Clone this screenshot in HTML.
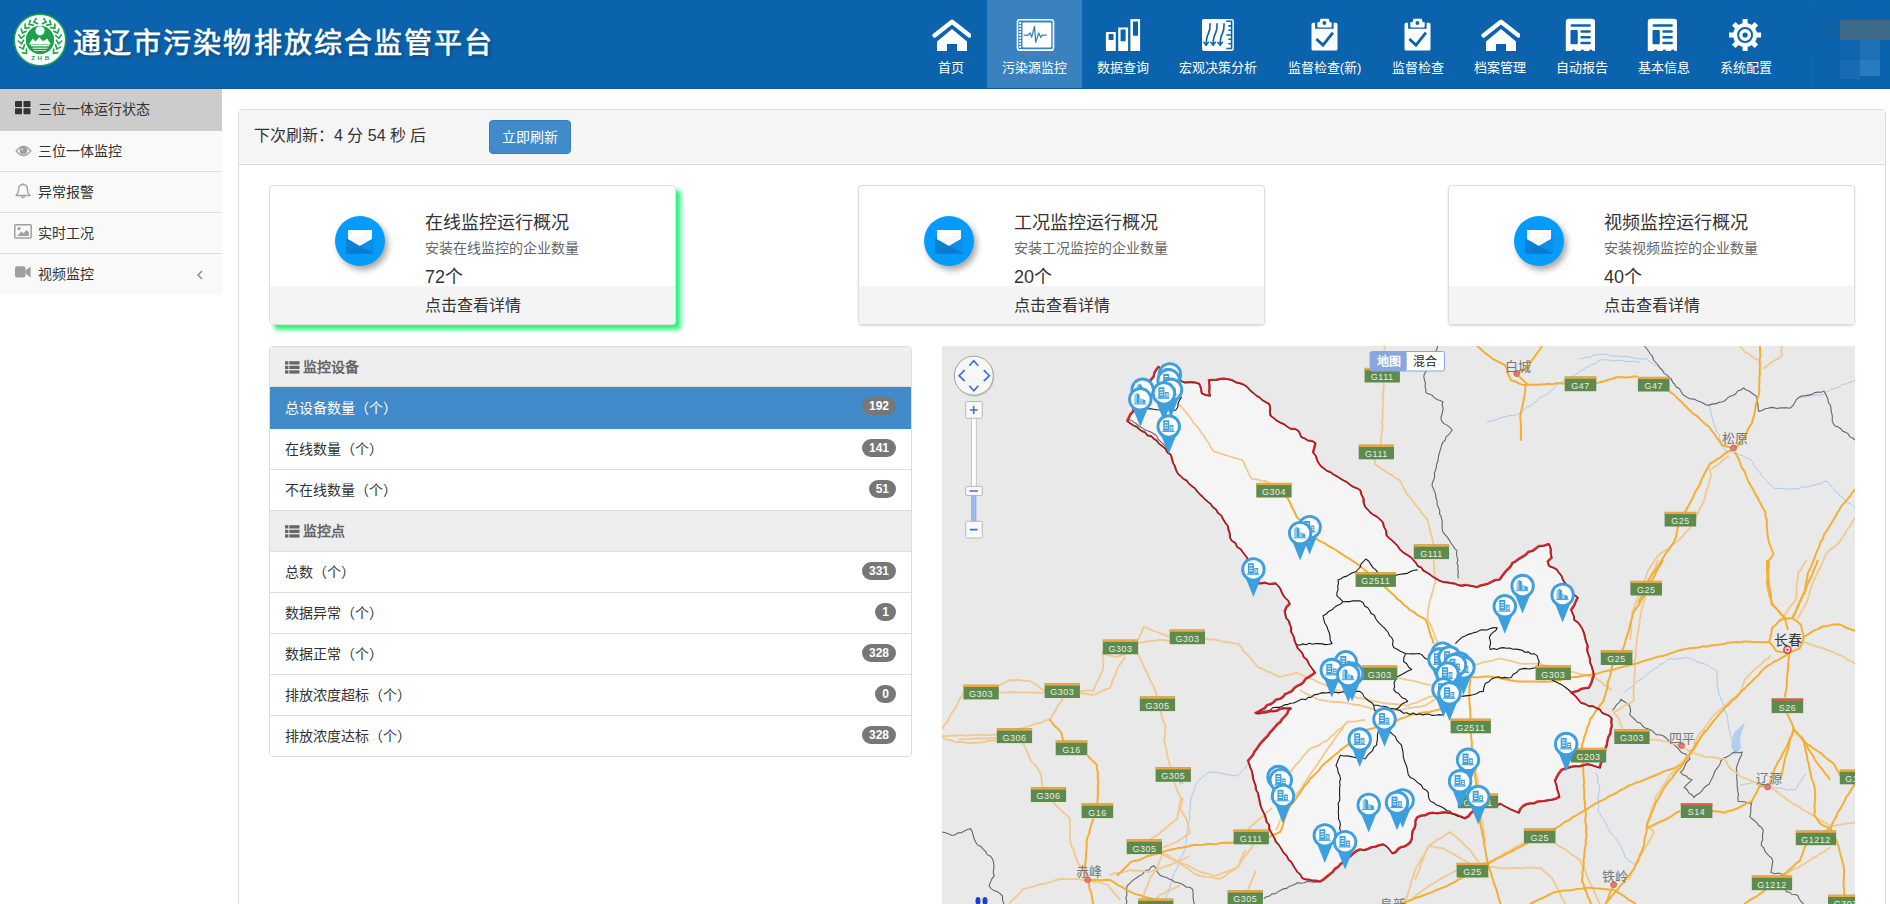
<!DOCTYPE html>
<html lang="zh-CN"><head><meta charset="utf-8">
<style>
*{margin:0;padding:0;box-sizing:border-box}
html,body{width:1890px;height:904px;overflow:hidden;background:#fff;font-family:"Liberation Sans",sans-serif;color:#333}
.abs{position:absolute}
#hdr{position:absolute;left:0;top:0;width:1890px;height:89px;background:#0b63ae;border-bottom:1px solid #0a5aa0}
#title{position:absolute;left:73px;top:21px;font-size:28px;letter-spacing:2.1px;color:#fff;font-weight:normal;-webkit-text-stroke:0.7px #fff;white-space:nowrap;text-shadow:2px 2px 4px rgba(0,0,0,.35)}
.nav{position:absolute;top:0;height:88px;text-align:center;color:#fff;font-size:13px}
.nav.act{background:#3a82bf}
.nav svg{position:absolute;top:18px;left:50%;margin-left:-20px;width:40px;height:34px}
.nav span{position:absolute;left:0;right:0;top:57px;white-space:nowrap}
#side{position:absolute;left:0;top:89px;width:222px}
.si{height:41px;background:#f9f9f9;border-bottom:1px solid #ddd;font-size:14px;color:#333;position:relative}
.si.act{background:#ccc;border-bottom:none;height:42px}
.si:last-child{border-bottom:none}
.si span{position:absolute;left:38px;top:8.5px}
.si svg{position:absolute;left:15px;top:13px}
#panel{position:absolute;left:238px;top:109px;width:1648px;height:820px;border:1px solid #ddd;border-radius:4px}
#ph{position:absolute;left:0;top:0;right:0;height:55px;background:#f5f5f5;border-bottom:1px solid #ddd}
#btn{position:absolute;left:250px;top:10px;width:82px;height:34px;background:#428bca;border:1px solid #357ebd;border-radius:4px;color:#fff;font-size:14px;text-align:center;line-height:32px}
.card{position:absolute;top:185px;width:407px;height:140px;border:1px solid #ddd;border-radius:4px;background:#fff;box-shadow:0 1px 2px rgba(0,0,0,.15)}
.card.g{box-shadow:5px 5px 4px #33f283}
.card .ic{position:absolute;left:65px;top:30px;width:50px;height:50px;border-radius:50%;background:#059bfb;box-shadow:3px 4px 6px rgba(0,0,0,.35)}
.card .t1{position:absolute;left:155px;top:21.5px;font-size:18px;color:#333;white-space:nowrap}
.card .t2{position:absolute;left:155px;top:51px;font-size:14px;color:#666;white-space:nowrap}
.card .t3{position:absolute;left:155px;top:76px;font-size:18px;color:#333;white-space:nowrap}
.card .ft{position:absolute;left:0;right:0;top:100px;bottom:0;background:#f4f4f4}
.card .ft span{position:absolute;left:155px;top:6px;font-size:16px;color:#333}
#list{position:absolute;left:269px;top:346px;width:643px;height:411px;border:1px solid #ddd;border-radius:4px;overflow:hidden}
.lr{position:relative;height:41px;border-bottom:1px solid #ddd;font-size:14px;color:#333;background:#fff}
.lr:last-child{border-bottom:none}
.lr.h{background:#eee;color:#666;font-weight:bold}
.lr.sel{background:#428bca;color:#fff;border-bottom-color:#428bca;height:42px}
.lr.h1{height:40px}
.lr span.l{position:absolute;left:15px;top:9px;white-space:nowrap}
.lr.h span.l{top:9px}
.lr.sel span.l{top:10px}
.lr .b{position:absolute;right:15px;top:10px;height:18px;padding:0 7px;border-radius:10px;background:#777;color:#fff;font-size:12px;font-weight:bold;line-height:18px}
#map{position:absolute;left:942px;top:346px;width:913px;height:558px;background:#e8e8e8;overflow:hidden}
</style></head><body>
<svg width="0" height="0" style="position:absolute"><defs>
<symbol id="i-house" viewBox="0 0 40 34"><path d="M3.5 17.5 L21 3.8 L38.5 17.5" fill="none" stroke="#fff" stroke-width="4.3" stroke-linecap="round" stroke-linejoin="round"/><path d="M6 23.5 L21 11 L36 23.5 V33 H26 V26 H16 V33 H6 Z" fill="#fff"/></symbol>
<symbol id="i-clip" viewBox="0 0 40 34"><path fill="#fff" d="M8 4.7 h2.1 v6.1 h18.5 v-6.1 h2.4 a1.5 1.5 0 0 1 1.5 1.5 v24.8 a1.5 1.5 0 0 1 -1.5 1.5 h-23 a1.5 1.5 0 0 1 -1.5 -1.5 v-24.8 a1.5 1.5 0 0 1 1.5 -1.5 Z"/><path fill="#fff" d="M12.3 8.6 v-4.4 h2.2 l1 -3.4 h8.2 l1 3.4 h2 v4.4 a0.8 0.8 0 0 1 -0.8 0.8 h-12.8 a0.8 0.8 0 0 1 -0.8 -0.8 Z"/><circle cx="19.4" cy="5" r="1.9" fill="#0b63ae"/><path d="M11.3 21 L18 27.1 L27.9 14.7" fill="none" stroke="#0b63ae" stroke-width="2.8"/></symbol>
<symbol id="i-report" viewBox="0 0 40 34"><path fill="#fff" fill-rule="evenodd" d="M3.8 3.8 a3 3 0 0 1 3 -3 h23.2 a3 3 0 0 1 3 3 V32.9 h-2.3 a2 2 0 0 0 -3.8 0 h-4.7 a2 2 0 0 0 -3.8 0 h-4.7 a2 2 0 0 0 -3.8 0 H3.8 Z M9.8 6.2 h17.8 a1.3 1.3 0 0 1 0 2.6 h-17.8 a1.3 1.3 0 0 1 0 -2.6 Z M9.5 12 h5.3 a1 1 0 0 1 1 1 v12.3 a1 1 0 0 1 -1 1 h-5.3 a1 1 0 0 1 -1 -1 v-12.3 a1 1 0 0 1 1 -1 Z M19.6 12.2 h8 a1.25 1.25 0 0 1 0 2.5 h-8 a1.25 1.25 0 0 1 0 -2.5 Z M19.6 17.9 h8 a1.3 1.3 0 0 1 0 2.6 h-8 a1.3 1.3 0 0 1 0 -2.6 Z M19.6 23.7 h8 a1.3 1.3 0 0 1 0 2.6 h-8 a1.3 1.3 0 0 1 0 -2.6 Z"/></symbol>
</defs></svg>
<div id="hdr">

  <svg class="abs" style="left:13px;top:13px" width="54" height="54" viewBox="0 0 54 54">
    <circle cx="27" cy="27" r="25.8" fill="#fff" stroke="#1aa34a" stroke-width="1.6"/>
    <g fill="none" stroke="#1aa34a" stroke-width="1.6" stroke-linecap="round"><path transform="translate(12.95 39.65) rotate(-132.0)" d="M2.4 -2.7 L-0.8 0 L2.4 2.7"/><path transform="translate(9.94 35.14) rotate(-115.5)" d="M2.4 -2.7 L-0.8 0 L2.4 2.7"/><path transform="translate(8.33 29.96) rotate(-99.0)" d="M2.4 -2.7 L-0.8 0 L2.4 2.7"/><path transform="translate(8.26 24.53) rotate(-82.5)" d="M2.4 -2.7 L-0.8 0 L2.4 2.7"/><path transform="translate(9.73 19.31) rotate(-66.0)" d="M2.4 -2.7 L-0.8 0 L2.4 2.7"/><path transform="translate(12.63 14.73) rotate(-49.5)" d="M2.4 -2.7 L-0.8 0 L2.4 2.7"/><path transform="translate(16.71 11.15) rotate(-33.0)" d="M2.4 -2.7 L-0.8 0 L2.4 2.7"/><path transform="translate(21.63 8.88) rotate(-16.5)" d="M2.4 -2.7 L-0.8 0 L2.4 2.7"/><path transform="translate(41.05 39.65) rotate(-48.0)" d="M2.4 -2.7 L-0.8 0 L2.4 2.7"/><path transform="translate(44.06 35.14) rotate(-64.5)" d="M2.4 -2.7 L-0.8 0 L2.4 2.7"/><path transform="translate(45.67 29.96) rotate(-81.0)" d="M2.4 -2.7 L-0.8 0 L2.4 2.7"/><path transform="translate(45.74 24.53) rotate(-97.5)" d="M2.4 -2.7 L-0.8 0 L2.4 2.7"/><path transform="translate(44.27 19.31) rotate(-114.0)" d="M2.4 -2.7 L-0.8 0 L2.4 2.7"/><path transform="translate(41.37 14.73) rotate(-130.5)" d="M2.4 -2.7 L-0.8 0 L2.4 2.7"/><path transform="translate(37.29 11.15) rotate(-147.0)" d="M2.4 -2.7 L-0.8 0 L2.4 2.7"/><path transform="translate(32.37 8.88) rotate(-163.5)" d="M2.4 -2.7 L-0.8 0 L2.4 2.7"/></g>
    <circle cx="27" cy="27" r="14.2" fill="#1aa34a"/>
    <circle cx="27" cy="17.8" r="4.6" fill="#fff"/>
    <path d="M16 31.5 L19.6 25.5 L22.5 28.5 L26.2 24.3 L30 28.3 L34.2 25.5 L37.8 31.5 Z" fill="#fff"/>
    <rect x="18" y="32" width="18" height="1.3" fill="#fff"/>
    <rect x="19.5" y="34.6" width="15" height="1.2" fill="#fff" opacity=".8"/>
    <rect x="21" y="37" width="12" height="1" fill="#fff" opacity=".7"/>
    <text x="28.5" y="47.3" text-anchor="middle" font-size="6.2" fill="#1aa34a" font-family="Liberation Sans" font-weight="bold" letter-spacing="2.6">ZHB</text>
  </svg>
  <div class="nav" style="left:915px;width:72px"><svg viewBox="0 0 40 34"><use href="#i-house"/></svg><span>首页</span></div>
  <div class="nav act" style="left:987px;width:95px"><svg viewBox="0 0 40 34"><rect x="2.5" y="1.7" width="36" height="30.4" rx="2.2" fill="none" stroke="#fff" stroke-width="1.6"/><rect x="7.5" y="4.6" width="28.8" height="24.9" rx="1.2" fill="#fff"/><g fill="#fff"><rect x="4.2" y="4.1" width="1.9" height="1.9" rx=".4"/><rect x="4.2" y="7.1" width="1.9" height="1.9" rx=".4"/><rect x="4.2" y="10.1" width="1.9" height="1.9" rx=".4"/><rect x="4.2" y="13.1" width="1.9" height="1.9" rx=".4"/><rect x="4.2" y="16.1" width="1.9" height="1.9" rx=".4"/><rect x="4.2" y="19.1" width="1.9" height="1.9" rx=".4"/><rect x="4.2" y="22.1" width="1.9" height="1.9" rx=".4"/><rect x="4.2" y="25.1" width="1.9" height="1.9" rx=".4"/><rect x="4.2" y="28.1" width="1.9" height="1.9" rx=".4"/></g><path d="M9.1 17.1 L12.8 17.4 L15.1 15 L16.7 19.2 L19.5 8.3 L20.7 24.3 L23.7 15 L25.8 19.5 L27.2 17.1 L31.4 17.1" fill="none" stroke="#3a82bf" stroke-width="1.3" stroke-linejoin="round" stroke-linecap="round"/></svg><span>污染源监控</span></div>
  <div class="nav" style="left:1082px;width:82px"><svg viewBox="0 0 40 34"><path fill="#fff" fill-rule="evenodd" d="M2.9 14 h9.9 v19 h-9.9 Z M5.6 16 v6 h4.9 v-6 Z M15.2 9.4 h9.9 v23.6 h-9.9 Z M17.6 11.5 v11.8 h5 v-11.8 Z M27.4 1 h9.7 v32 h-9.7 Z M30 3.4 v14.4 h5 v-14.4 Z"/></svg><span>数据查询</span></div>
  <div class="nav" style="left:1164px;width:108px"><svg viewBox="0 0 40 34"><rect x="4" y="0.9" width="31.8" height="32" rx="1.8" fill="#fff"/><g fill="none" stroke="#0b63ae" stroke-width="1.6" stroke-linecap="round"><path d="M12.1 5.8 C12.2 10 11.8 13 10.2 16 C8.6 19 8.2 22 8.2 27"/><path d="M5.9 24.3 L8.1 27 L10.5 24.3"/><path d="M19.1 5.8 C19.2 10 18.8 13 17.2 16 C15.6 19 15.2 22 15.2 27"/><path d="M12.9 24.3 L15.1 27 L17.5 24.3"/><path d="M26.1 5.8 C26.2 10 25.8 13 24.2 16 C22.6 19 22.2 22 22.2 27"/><path d="M19.9 24.3 L22.1 27 L24.5 24.3"/><path d="M28.3 3.3 H33.6 V30.5 H28.3 M28.3 17 H33.6 M30.3 7.9 H33.6 M30.3 12.3 H33.6 M30.3 21.3 H33.6 M30.3 25.8 H33.6" stroke-linecap="butt"/></g></svg><span>宏观决策分析</span></div>
  <div class="nav" style="left:1272px;width:105px"><svg viewBox="0 0 40 34"><use href="#i-clip"/></svg><span>监督检查(新)</span></div>
  <div class="nav" style="left:1377px;width:82px"><svg viewBox="0 0 40 34"><use href="#i-clip"/></svg><span>监督检查</span></div>
  <div class="nav" style="left:1459px;width:82px"><svg viewBox="0 0 40 34"><use href="#i-house"/></svg><span>档案管理</span></div>
  <div class="nav" style="left:1541px;width:82px"><svg viewBox="0 0 40 34"><use href="#i-report"/></svg><span>自动报告</span></div>
  <div class="nav" style="left:1623px;width:82px"><svg viewBox="0 0 40 34"><use href="#i-report"/></svg><span>基本信息</span></div>
  <div class="nav" style="left:1705px;width:82px"><svg viewBox="0 0 40 34"><g transform="translate(19.1 17)"><g fill="#fff"><circle r="12"/><rect x="-2.5" y="-16" width="5" height="32"/><rect x="-2.5" y="-16" width="5" height="32" transform="rotate(45)"/><rect x="-2.5" y="-16" width="5" height="32" transform="rotate(90)"/><rect x="-2.5" y="-16" width="5" height="32" transform="rotate(135)"/></g><circle r="7" fill="none" stroke="#0b63ae" stroke-width="2"/><circle r="2.6" fill="#0b63ae"/></g></svg><span>系统配置</span></div>
  <div class="abs" style="left:1811px;top:0;width:1px;height:3px;background:#1a6a9a"></div><div class="abs" style="left:1811px;top:58px;width:1px;height:30px;background:#1a6a9a"></div>
  <div class="abs" style="left:1820px;top:20px;width:20px;height:20px;background:#0f61a8"></div>
  <div class="abs" style="left:1840px;top:20px;width:50px;height:20px;background:#3d6a88"></div>
  <div class="abs" style="left:1840px;top:40px;width:20px;height:20px;background:#1165b0"></div>
  <div class="abs" style="left:1860px;top:40px;width:20px;height:20px;background:#1f70b6"></div>
  <div class="abs" style="left:1840px;top:60px;width:20px;height:19px;background:#186bb3"></div>
  <div class="abs" style="left:1860px;top:60px;width:20px;height:16px;background:#2a7abe"></div>
  <div id="title">通辽市污染物排放综合监管平台</div>
</div>
<div id="side">
  <div class="si act"><span>三位一体运行状态</span><svg width="16" height="14" viewBox="0 0 16 14" style="left:15px;top:12px"><g fill="#333"><rect x="0" y="0" width="7" height="6" rx=".8"/><rect x="8.5" y="0" width="7" height="6" rx=".8"/><rect x="0" y="7.3" width="7" height="6" rx=".8"/><rect x="8.5" y="7.3" width="7" height="6" rx=".8"/></g></svg></div>
  <div class="si"><span>三位一体监控</span><svg width="17" height="12" viewBox="0 0 17 12" style="left:14.5px;top:13.5px"><path d="M0.3 6 Q8.5 -4.5 16.7 6 Q8.5 16.5 0.3 6 Z" fill="#a0a0a0"/><path d="M2.2 6 Q8.5 -2 14.8 6 Q8.5 14 2.2 6 Z" fill="#f9f9f9"/><circle cx="8.5" cy="5.6" r="3.9" fill="#a0a0a0"/><circle cx="7.2" cy="4.3" r="1.1" fill="#d0d0d0"/></svg></div>
  <div class="si"><span>异常报警</span><svg width="16" height="17" viewBox="0 0 16 17" style="left:15px;top:10.5px"><path d="M8 1.5 C4.5 1.5 3.5 4 3.5 7 C3.5 10 2.5 11 1 12.5 H15 C13.5 11 12.5 10 12.5 7 C12.5 4 11.5 1.5 8 1.5 Z" fill="none" stroke="#a0a0a0" stroke-width="1.4" stroke-linejoin="round"/><path d="M6.3 13.5 Q8 15.8 9.7 13.5" fill="none" stroke="#a0a0a0" stroke-width="1.4"/><circle cx="8" cy="1.2" r=".9" fill="#a0a0a0"/></svg></div>
  <div class="si"><span>实时工况</span><svg width="18" height="15" viewBox="0 0 18 15" style="left:14px;top:11px"><rect x=".8" y=".8" width="16.4" height="13.2" rx="1" fill="none" stroke="#a0a0a0" stroke-width="1.5"/><circle cx="5" cy="4.6" r="1.6" fill="#a0a0a0"/><path d="M3 12 L7.5 7.5 L9.5 9.5 L12.5 6 L15 8.5 V12 Z" fill="#a0a0a0"/></svg></div>
  <div class="si"><span>视频监控</span><svg width="16" height="12" viewBox="0 0 16 12" style="left:15px;top:12px"><rect x="0" y="0.3" width="10.5" height="11.2" rx="2" fill="#a0a0a0"/><path d="M10.5 4.3 L15.7 0.5 V11.5 L10.5 7.7 Z" fill="#a0a0a0"/></svg><svg width="8" height="10" viewBox="0 0 8 10" style="left:196px;top:16px"><path d="M6 1 L2 5 L6 9" fill="none" stroke="#888" stroke-width="1.4"/></svg></div>
</div>
<div id="panel">
  <div id="ph"><span class="abs" style="left:15px;top:12px;font-size:16px">下次刷新：4 分 54 秒 后</span><div id="btn">立即刷新</div></div>
</div>
<div class="card g" style="left:269px"><div class="ic"><svg class="abs" style="left:11px;top:14px" width="28" height="24" viewBox="0 0 28 24"><rect x="2" y="0" width="24" height="16" fill="#fff"/><rect x="3.5" y="2" width="2" height="2.5" fill="#e6e6e6"/><path d="M17 4 h7 M17 6.5 h7 M4 9 h20 M4 11.5 h20" stroke="#e9e9e9" stroke-width=".7"/><path d="M0 8 L14 16 L28 8 V23.5 H0 Z" fill="#0a80d6"/><path d="M14 16 L28 8 V23.5 Z" fill="#0b8fe8"/><path d="M0 23.5 L14 16 L28 23.5 Z" fill="#0a76c8" opacity=".6"/></svg></div><div class="t1">在线监控运行概况</div><div class="t2">安装在线监控的企业数量</div><div class="t3">72个</div><div class="ft"><span>点击查看详情</span></div></div>
<div class="card" style="left:858px"><div class="ic"><svg class="abs" style="left:11px;top:14px" width="28" height="24" viewBox="0 0 28 24"><rect x="2" y="0" width="24" height="16" fill="#fff"/><rect x="3.5" y="2" width="2" height="2.5" fill="#e6e6e6"/><path d="M17 4 h7 M17 6.5 h7 M4 9 h20 M4 11.5 h20" stroke="#e9e9e9" stroke-width=".7"/><path d="M0 8 L14 16 L28 8 V23.5 H0 Z" fill="#0a80d6"/><path d="M14 16 L28 8 V23.5 Z" fill="#0b8fe8"/><path d="M0 23.5 L14 16 L28 23.5 Z" fill="#0a76c8" opacity=".6"/></svg></div><div class="t1">工况监控运行概况</div><div class="t2">安装工况监控的企业数量</div><div class="t3">20个</div><div class="ft"><span>点击查看详情</span></div></div>
<div class="card" style="left:1448px"><div class="ic"><svg class="abs" style="left:11px;top:14px" width="28" height="24" viewBox="0 0 28 24"><rect x="2" y="0" width="24" height="16" fill="#fff"/><rect x="3.5" y="2" width="2" height="2.5" fill="#e6e6e6"/><path d="M17 4 h7 M17 6.5 h7 M4 9 h20 M4 11.5 h20" stroke="#e9e9e9" stroke-width=".7"/><path d="M0 8 L14 16 L28 8 V23.5 H0 Z" fill="#0a80d6"/><path d="M14 16 L28 8 V23.5 Z" fill="#0b8fe8"/><path d="M0 23.5 L14 16 L28 23.5 Z" fill="#0a76c8" opacity=".6"/></svg></div><div class="t1">视频监控运行概况</div><div class="t2">安装视频监控的企业数量</div><div class="t3">40个</div><div class="ft"><span>点击查看详情</span></div></div>
<div id="list">
  <div class="lr h h1"><svg class="abs" style="left:15px;top:13.5px" width="14.5" height="13" viewBox="0 0 15 13"><g fill="#666"><rect x="0" y="0" width="3.5" height="3.4"/><rect x="4.5" y="0" width="10.5" height="3.4"/><rect x="0" y="4.7" width="3.5" height="3.4"/><rect x="4.5" y="4.7" width="10.5" height="3.4"/><rect x="0" y="9.4" width="3.5" height="3.4"/><rect x="4.5" y="9.4" width="10.5" height="3.4"/></g></svg><span class="l" style="left:33px">监控设备</span></div>
  <div class="lr sel"><span class="l">总设备数量（个）</span><span class="b">192</span></div>
  <div class="lr"><span class="l">在线数量（个）</span><span class="b">141</span></div>
  <div class="lr"><span class="l">不在线数量（个）</span><span class="b">51</span></div>
  <div class="lr h"><svg class="abs" style="left:15px;top:13.5px" width="14.5" height="13" viewBox="0 0 15 13"><g fill="#666"><rect x="0" y="0" width="3.5" height="3.4"/><rect x="4.5" y="0" width="10.5" height="3.4"/><rect x="0" y="4.7" width="3.5" height="3.4"/><rect x="4.5" y="4.7" width="10.5" height="3.4"/><rect x="0" y="9.4" width="3.5" height="3.4"/><rect x="4.5" y="9.4" width="10.5" height="3.4"/></g></svg><span class="l" style="left:33px">监控点</span></div>
  <div class="lr"><span class="l">总数（个）</span><span class="b">331</span></div>
  <div class="lr"><span class="l">数据异常（个）</span><span class="b">1</span></div>
  <div class="lr"><span class="l">数据正常（个）</span><span class="b">328</span></div>
  <div class="lr"><span class="l">排放浓度超标（个）</span><span class="b">0</span></div>
  <div class="lr"><span class="l">排放浓度达标（个）</span><span class="b">328</span></div>
</div>
<div id="map"><svg width="913" height="558" viewBox="942 346 913 558" style="position:absolute;left:0;top:0">
<rect x="942" y="346" width="913" height="558" fill="#e9e9e9"/>
<path d="M1127.2 421.3 L1128.8 417.9 L1130.4 414.6 L1133.0 411.8 L1133.9 408.1 L1136.5 405.3 L1138.1 401.9 L1139.5 398.5 L1142.0 395.7 L1143.2 392.0 L1145.6 389.2 L1146.9 385.6 L1148.8 382.5 L1151.2 379.6 L1153.7 376.7 L1154.4 372.9 L1156.4 369.8 L1158.7 366.8 L1161.9 369.1 L1164.8 371.7 L1168.5 373.2 L1171.9 375.0 L1174.7 378.0 L1178.9 378.7 L1181.7 381.5 L1185.2 382.6 L1188.9 382.1 L1192.5 382.3 L1196.0 382.7 L1199.5 383.9 L1201.0 388.6 L1201.8 393.4 L1205.8 395.1 L1210.1 395.7 L1209.2 391.9 L1209.6 388.0 L1209.4 384.1 L1208.9 380.3 L1212.7 379.9 L1216.5 379.9 L1220.3 378.9 L1224.1 378.6 L1227.9 379.2 L1232.2 380.2 L1236.0 382.4 L1240.3 383.4 L1244.4 385.0 L1247.6 387.4 L1250.2 390.5 L1253.4 393.0 L1256.3 395.7 L1259.7 397.5 L1262.5 400.3 L1265.9 402.2 L1269.3 404.0 L1270.2 407.9 L1270.0 411.9 L1270.5 415.9 L1273.8 418.1 L1276.7 420.7 L1280.2 422.6 L1283.9 424.1 L1287.0 426.5 L1290.6 428.9 L1295.2 429.0 L1298.9 431.2 L1301.3 437.2 L1304.9 438.5 L1308.2 440.6 L1312.2 441.0 L1315.5 443.1 L1314.3 447.9 L1313.1 452.6 L1315.9 455.7 L1317.0 459.9 L1318.9 463.5 L1321.4 466.8 L1324.4 468.8 L1327.2 471.1 L1330.8 472.2 L1333.5 474.6 L1336.8 476.2 L1340.1 478.4 L1343.5 480.4 L1347.0 482.2 L1350.0 484.8 L1353.3 487.0 L1357.1 488.3 L1360.5 490.4 L1361.4 494.6 L1363.6 498.5 L1363.7 502.9 L1365.2 507.0 L1368.0 509.8 L1370.6 512.8 L1373.7 515.1 L1377.3 517.0 L1380.2 519.7 L1383.0 522.4 L1383.9 526.8 L1386.2 530.8 L1386.5 535.4 L1389.2 538.2 L1392.3 540.7 L1395.1 543.4 L1397.9 546.2 L1400.0 549.6 L1403.8 552.9 L1408.1 555.4 L1411.1 557.5 L1413.5 560.2 L1415.9 562.9 L1417.8 566.1 L1421.4 567.6 L1423.4 570.7 L1426.8 572.5 L1430.1 574.6 L1433.2 577.1 L1436.7 578.9 L1440.0 580.9 L1443.7 582.2 L1447.4 582.4 L1451.1 583.2 L1454.8 583.6 L1458.3 585.2 L1462.0 585.8 L1465.9 585.0 L1469.5 585.6 L1473.2 586.3 L1476.8 587.3 L1480.5 585.6 L1484.4 584.7 L1488.3 583.6 L1491.9 581.8 L1495.6 580.0 L1499.7 579.6 L1502.1 576.2 L1504.6 572.9 L1507.4 569.8 L1510.5 566.9 L1512.4 563.1 L1515.9 561.3 L1519.0 558.9 L1522.4 556.9 L1525.8 554.9 L1528.5 551.9 L1532.6 551.0 L1535.8 548.7 L1538.8 546.2 L1544.0 545.8 L1549.0 544.0 L1550.8 548.8 L1550.7 553.3 L1551.7 557.7 L1547.7 561.7 L1549.0 566.1 L1552.8 567.5 L1556.5 569.2 L1558.9 572.7 L1561.6 575.9 L1563.0 580.0 L1565.4 583.4 L1568.2 585.8 L1570.4 588.7 L1572.4 591.7 L1574.2 594.9 L1577.8 597.5 L1576.0 601.0 L1574.1 605.7 L1571.2 609.9 L1572.5 613.2 L1574.0 616.4 L1574.2 620.0 L1578.3 622.7 L1581.1 626.7 L1583.0 630.3 L1584.3 634.1 L1585.2 638.1 L1586.2 642.0 L1587.8 645.9 L1587.1 650.2 L1588.3 654.2 L1589.9 658.1 L1590.0 662.3 L1591.7 666.4 L1592.9 670.7 L1593.9 675.0 L1592.4 679.4 L1591.1 683.8 L1588.8 687.8 L1585.1 688.2 L1581.4 688.9 L1578.1 690.9 L1574.6 691.8 L1571.0 692.8 L1574.1 694.8 L1576.6 697.4 L1578.8 700.3 L1581.1 703.0 L1585.1 703.9 L1588.6 706.1 L1592.8 706.2 L1596.4 708.1 L1599.9 709.4 L1602.1 712.9 L1605.6 714.3 L1609.0 715.7 L1611.7 718.3 L1611.3 722.1 L1611.9 726.0 L1610.7 729.8 L1610.4 733.6 L1608.4 737.2 L1607.4 741.1 L1606.8 745.1 L1605.3 748.8 L1604.9 752.8 L1603.6 756.5 L1602.8 760.3 L1600.7 763.8 L1600.0 767.7 L1595.5 766.5 L1591.1 764.9 L1586.5 764.3 L1583.0 765.4 L1579.5 766.4 L1575.7 766.2 L1572.1 766.6 L1568.6 767.7 L1565.0 768.6 L1561.6 769.9 L1558.9 773.4 L1556.8 777.2 L1554.9 781.2 L1556.5 785.0 L1557.1 789.1 L1558.5 793.0 L1559.4 797.0 L1556.0 798.7 L1552.4 799.6 L1548.7 800.1 L1545.1 801.0 L1541.3 801.2 L1537.5 801.6 L1534.2 803.4 L1530.3 803.4 L1526.7 804.2 L1523.3 806.0 L1520.4 808.9 L1518.8 812.8 L1515.1 811.2 L1511.3 809.7 L1507.7 807.8 L1504.1 806.1 L1500.7 803.8 L1497.1 805.1 L1493.2 805.1 L1489.3 805.3 L1485.6 806.2 L1482.0 807.6 L1478.2 808.3 L1474.6 810.6 L1471.1 812.9 L1468.4 816.5 L1464.6 818.4 L1460.7 816.7 L1456.9 814.9 L1452.9 813.7 L1448.8 812.8 L1444.8 812.3 L1440.9 812.8 L1437.0 813.4 L1433.0 812.8 L1428.9 813.4 L1425.2 815.3 L1421.1 815.7 L1417.3 817.3 L1415.5 820.6 L1415.5 824.4 L1414.6 828.0 L1412.6 831.3 L1412.1 834.9 L1412.0 838.7 L1410.5 842.1 L1407.8 844.6 L1404.8 846.4 L1401.1 847.1 L1398.1 849.2 L1395.8 852.1 L1392.4 853.4 L1389.8 850.0 L1387.0 846.8 L1383.4 844.4 L1379.5 845.1 L1375.7 846.6 L1371.8 847.2 L1368.1 848.9 L1364.3 850.1 L1360.0 849.4 L1356.3 851.2 L1353.1 853.6 L1350.3 856.4 L1346.8 858.5 L1344.4 861.8 L1340.9 863.8 L1338.3 866.9 L1334.9 868.9 L1332.6 872.2 L1329.5 874.6 L1326.5 877.0 L1323.5 879.5 L1320.2 881.6 L1316.6 880.8 L1312.9 880.7 L1309.4 879.7 L1305.7 879.5 L1302.2 878.2 L1300.5 874.7 L1297.5 872.2 L1295.4 868.9 L1293.3 865.7 L1291.5 862.3 L1288.5 859.7 L1287.0 856.1 L1284.1 853.4 L1282.2 850.4 L1280.4 847.4 L1278.5 844.4 L1275.9 841.9 L1274.7 838.5 L1272.9 835.4 L1271.0 832.2 L1269.3 829.0 L1269.2 825.0 L1266.7 822.1 L1265.8 818.5 L1264.8 814.9 L1263.1 811.6 L1261.6 808.3 L1260.3 804.6 L1259.6 800.8 L1258.7 797.0 L1258.1 793.1 L1255.9 789.7 L1255.7 785.7 L1254.2 782.1 L1253.2 778.4 L1252.6 774.5 L1251.9 770.9 L1250.3 767.7 L1249.3 764.3 L1248.0 760.9 L1250.6 758.0 L1253.1 755.0 L1254.7 751.4 L1257.2 748.4 L1259.3 745.1 L1261.9 742.1 L1264.6 739.1 L1267.5 736.3 L1269.8 733.0 L1272.5 730.1 L1275.1 727.1 L1277.3 724.4 L1280.3 722.2 L1282.2 719.2 L1284.7 716.7 L1287.1 714.0 L1288.4 710.5 L1291.0 708.1 L1287.4 708.5 L1283.8 708.3 L1280.2 709.0 L1276.9 710.8 L1273.3 711.3 L1269.7 711.3 L1266.2 712.4 L1262.6 712.6 L1259.1 713.5 L1255.4 713.2 L1258.6 711.6 L1261.7 709.9 L1264.8 708.2 L1267.1 705.3 L1270.6 704.3 L1273.6 702.3 L1276.1 699.7 L1279.8 699.0 L1282.9 697.2 L1285.2 694.2 L1288.5 692.8 L1292.0 691.2 L1294.3 688.1 L1297.4 686.0 L1300.9 684.5 L1303.7 682.0 L1305.9 678.8 L1309.2 676.9 L1312.3 674.8 L1315.2 672.5 L1312.8 669.6 L1310.5 666.6 L1308.6 663.4 L1307.1 659.8 L1303.9 657.4 L1302.6 653.8 L1300.3 650.8 L1297.6 648.1 L1296.2 644.5 L1294.8 641.3 L1294.1 637.8 L1292.8 634.6 L1290.9 631.5 L1291.3 627.7 L1289.8 624.5 L1289.0 621.1 L1286.3 618.3 L1285.5 614.8 L1284.7 611.4 L1286.6 607.1 L1289.8 603.8 L1288.2 600.6 L1285.5 598.2 L1283.3 595.4 L1281.7 592.2 L1280.4 588.8 L1278.3 586.0 L1275.8 583.4 L1272.2 583.8 L1268.7 584.0 L1265.1 582.6 L1261.6 583.3 L1258.0 583.4 L1256.7 579.8 L1254.2 576.7 L1252.5 573.2 L1252.0 569.3 L1249.9 566.0 L1247.8 562.7 L1247.6 558.6 L1245.3 555.4 L1242.9 552.3 L1240.6 549.1 L1237.1 547.0 L1235.6 543.1 L1232.0 541.1 L1230.0 537.6 L1229.9 533.6 L1228.5 529.9 L1227.9 526.0 L1225.3 522.8 L1223.2 519.3 L1221.4 515.6 L1218.0 513.0 L1216.0 509.4 L1212.9 507.2 L1210.7 504.0 L1207.7 501.7 L1204.9 499.2 L1202.3 496.5 L1199.5 494.0 L1197.0 491.1 L1194.7 488.1 L1191.7 486.0 L1188.9 483.6 L1186.7 480.6 L1183.4 478.9 L1180.9 476.3 L1178.1 473.9 L1176.1 470.3 L1175.0 466.4 L1173.0 462.8 L1172.0 458.9 L1171.0 454.9 L1167.5 452.7 L1165.6 448.9 L1162.5 446.3 L1159.2 443.9 L1156.8 440.7 L1153.8 438.8 L1151.3 436.2 L1147.5 435.5 L1145.3 432.5 L1141.9 431.1 L1139.0 429.1 L1136.4 426.6 L1133.0 425.3 L1130.2 423.2 L1127.2 421.3 Z" fill="#f5f5f5"/>
<path d="M1163.6 904.0 L1164.9 901.3 L1166.4 898.6 L1166.5 895.4 L1168.2 892.8 L1169.1 889.9 L1170.0 887.1 L1170.7 884.1 L1171.6 881.2 L1172.2 878.3 L1173.4 875.5 L1174.3 872.6 L1176.0 870.0 L1177.6 867.0 L1178.1 863.6 L1179.2 860.4 L1180.4 857.3 L1182.8 854.6 L1184.1 851.5 L1185.0 848.2 L1186.0 845.0 L1186.0 842.0 L1186.2 839.0 L1186.7 836.0 L1187.2 833.0 L1187.1 829.9 L1187.9 827.0 L1187.9 824.0 L1189.3 821.1 L1189.7 818.1 L1189.3 815.0 L1189.2 812.0 L1190.7 809.1 L1189.9 806.0 L1190.3 803.0 L1190.9 800.0 L1191.2 796.7 L1192.8 793.9 L1193.9 791.0 L1195.0 788.0 L1195.5 784.8 L1197.0 782.0 L1199.6 780.0 L1201.7 777.4 L1204.6 775.7 L1207.0 773.5 L1210.0 772.0 L1213.0 772.3 L1216.1 772.2 L1219.1 772.6 L1222.0 773.6 L1225.0 773.9 L1227.9 774.8 L1230.9 775.3 L1234.0 775.6 L1237.0 776.0 L1239.5 773.9 L1241.6 771.4 L1243.9 769.0 L1246.2 766.8 L1248.0 764.0" fill="none" stroke="#a9c9f2" stroke-width="1"/>
<path d="M1580.0 359.0 L1583.3 358.0 L1586.6 357.1 L1590.2 357.3 L1593.2 355.1 L1596.8 355.2 L1600.0 354.0 L1603.1 354.6 L1606.3 353.9 L1609.3 355.5 L1612.5 356.0 L1615.6 355.9 L1618.8 356.4 L1621.9 356.8 L1625.1 356.1 L1628.2 357.0 L1631.3 357.3 L1634.4 358.2 L1637.5 358.5 L1640.7 358.9 L1643.9 358.8 L1647.0 359.0 L1649.2 361.4 L1652.0 363.0 L1654.5 364.8 L1657.5 366.1 L1660.3 367.7 L1662.8 369.7 L1665.0 372.0" fill="none" stroke="#a9c9f2" stroke-width="1"/>
<path d="M1708.6 404.5 L1709.7 407.7 L1711.0 410.8 L1710.8 414.3 L1712.2 417.4 L1713.0 420.6 L1713.9 423.8 L1715.0 427.0 L1716.0 430.0 L1717.5 432.7 L1719.5 435.3 L1719.6 438.7 L1720.9 441.5 L1722.5 444.3 L1723.7 447.1 L1725.0 450.0 L1728.0 451.4 L1731.5 451.6 L1734.2 453.7 L1737.6 454.1 L1740.9 455.0 L1743.9 456.4 L1746.8 458.2 L1750.0 459.0 L1752.4 461.6 L1753.7 464.9 L1755.4 467.9 L1758.0 470.3 L1760.2 473.1 L1762.0 476.0 L1764.2 478.1 L1766.1 480.5 L1768.2 482.8 L1770.5 484.8 L1772.7 487.0 L1775.0 489.0 L1778.3 488.3 L1781.7 488.4 L1785.0 488.6 L1788.3 489.4 L1791.7 488.7 L1795.0 489.0 L1798.3 488.6 L1801.4 487.2 L1804.6 486.8 L1808.0 487.0 L1811.1 485.6 L1814.4 485.3 L1817.6 484.3 L1820.8 483.3 L1823.7 481.7 L1827.0 481.0 L1829.2 483.8 L1831.5 486.5 L1833.8 489.2 L1836.0 492.0 L1838.8 493.5 L1840.3 496.5 L1843.4 497.6 L1845.0 500.6 L1847.4 502.5 L1850.7 503.4 L1852.7 505.9 L1855.0 508.0" fill="none" stroke="#a9c9f2" stroke-width="1"/>
<path d="M1800.0 397.0 L1803.4 397.2 L1806.7 397.1 L1810.0 395.9 L1813.3 395.3 L1816.6 394.9 L1820.0 395.0 L1823.1 394.4 L1825.5 392.0 L1828.6 391.3 L1831.2 389.3 L1834.3 388.6 L1837.4 387.9 L1840.0 386.0 L1842.8 384.3 L1846.2 384.1 L1849.0 382.4 L1852.2 381.8 L1855.0 380.0" fill="none" stroke="#a9c9f2" stroke-width="1"/>
<path d="M1623.2 692.7 L1625.9 691.1 L1628.0 688.6 L1631.2 687.6 L1633.3 685.1 L1635.4 682.7 L1637.9 680.7 L1640.9 679.5 L1643.3 677.7 L1645.7 675.8 L1647.9 673.8 L1650.2 671.8 L1652.8 670.3 L1655.2 668.4 L1658.1 667.3 L1659.7 664.4 L1662.8 663.5 L1665.3 661.8 L1667.4 659.6 L1670.9 658.5 L1674.6 659.4 L1678.1 658.6 L1681.6 658.4 L1685.1 657.3 L1688.5 658.1 L1691.8 659.3 L1695.1 660.5 L1698.1 662.5 L1701.6 663.0 L1705.0 664.0 L1707.9 665.5 L1710.6 667.2 L1713.5 668.6 L1716.1 670.6 L1717.1 673.7 L1717.4 676.9 L1716.5 680.1 L1717.7 683.2 L1717.0 686.5 L1718.4 689.5 L1718.3 692.7 L1719.9 695.7 L1720.8 699.0 L1722.6 702.0 L1723.6 705.3 L1724.0 708.8 L1725.4 712.0 L1727.2 714.9 L1727.3 718.3 L1728.1 721.6 L1728.2 724.9 L1728.7 728.3 L1729.9 731.5 L1730.2 734.8 L1731.8 738.0 L1731.6 741.4" fill="none" stroke="#a9c9f2" stroke-width="1"/>
<path d="M1740.0 785.0 L1743.3 784.8 L1746.4 783.7 L1749.7 783.6 L1752.8 782.8 L1756.0 782.0 L1759.4 782.7 L1762.9 783.3 L1765.8 785.7 L1769.5 785.4 L1772.7 787.0 L1776.0 788.0 L1779.2 788.1 L1782.4 788.3 L1785.5 789.4 L1788.6 790.1 L1791.9 789.3 L1795.0 790.0 L1797.0 787.5 L1798.4 784.5 L1800.6 782.1 L1802.2 779.2 L1803.7 776.4 L1806.0 774.0" fill="none" stroke="#a9c9f2" stroke-width="1"/>
<path d="M1595.8 772.3 L1597.1 775.3 L1597.8 778.3 L1597.4 781.7 L1598.8 784.6 L1599.6 787.7 L1599.8 791.0 L1598.4 794.2 L1598.0 797.5 L1598.6 800.9 L1598.8 804.2 L1598.5 807.5 L1597.7 810.8 L1599.9 813.2 L1601.2 816.2 L1603.2 818.7 L1604.6 821.6 L1606.2 824.4 L1607.5 827.4 L1609.2 830.1 L1610.6 833.0 L1612.7 835.5 L1615.1 837.7 L1617.0 840.3 L1618.8 843.0 L1620.8 845.5 L1621.9 848.3 L1622.9 851.2 L1624.3 853.9 L1624.6 857.0 L1627.2 858.6 L1629.0 861.4 L1632.2 862.3 L1634.3 864.7" fill="none" stroke="#a9c9f2" stroke-width="1"/>
<path d="M1487.0 422.0 L1490.0 421.2 L1493.1 420.6 L1496.2 420.1 L1498.9 418.3 L1501.9 417.6 L1504.9 416.7 L1508.0 416.1 L1511.0 415.4 L1514.2 415.3 L1517.1 414.4 L1520.0 413.0 L1522.9 411.6 L1524.5 408.7 L1527.1 406.9 L1530.2 405.9 L1532.9 404.3 L1535.0 402.0 L1537.6 400.3 L1539.5 397.7 L1542.4 396.4 L1545.4 395.2 L1547.8 393.3 L1550.3 391.5 L1552.9 389.8 L1554.8 387.0 L1557.1 385.0 L1559.7 383.2 L1562.5 381.9 L1565.0 380.0 L1567.8 378.7 L1570.7 377.5 L1573.3 375.7 L1575.9 374.1 L1578.7 372.7 L1581.1 370.7 L1583.9 369.3 L1586.2 367.1 L1589.5 366.5 L1591.7 364.2 L1594.9 363.7 L1597.4 361.7 L1600.0 360.0 L1603.1 359.8 L1606.2 359.7 L1609.3 360.1 L1612.3 360.8 L1615.4 361.1 L1618.5 360.3 L1621.6 360.4 L1624.6 361.3 L1627.7 361.5 L1630.8 361.4 L1633.9 361.3 L1636.9 362.0 L1640.0 362.0" fill="none" stroke="#a9c9f2" stroke-width="1"/>
<path d="M1175 773 l5 12 l4 -2 Z M1734 733 L1745 722 L1740 738 L1741 748 L1735 755 L1731 746 Z" fill="#b0cdf2"/>
<path d="M1128.4 419.4 L1131.6 420.4 L1134.2 422.4 L1137.0 424.3 L1139.4 426.7 L1142.5 427.9 L1145.1 429.9 L1148.3 431.0 L1151.3 432.3 L1154.2 434.0 L1156.8 436.0 L1158.2 439.1 L1160.6 441.6 L1163.1 443.9 L1165.5 446.3 L1166.9 449.5 L1168.7 452.4 L1171.0 454.9" fill="none" stroke="#666" stroke-width="1.1"/>
<path d="M1320.2 881.6 L1317.0 881.9 L1313.8 882.3 L1310.5 881.8 L1307.3 881.5 L1304.1 882.8 L1301.0 883.3 L1297.7 882.7 L1295.0 884.3 L1292.1 885.4 L1289.1 886.4 L1286.6 888.4 L1283.4 888.9 L1280.6 890.3 L1277.9 891.9 L1275.3 893.7 L1272.0 893.9 L1269.6 896.1 L1266.4 896.7 L1263.8 898.5" fill="none" stroke="#666" stroke-width="1.1"/>
<path d="M942.0 832.0 L945.5 832.8 L948.8 833.9 L952.0 835.5 L955.2 834.8 L958.1 832.9 L961.5 832.8 L964.4 831.0 L967.3 829.4 L970.6 828.7 L972.3 831.9 L973.2 835.3 L974.1 838.8 L975.6 842.0 L977.5 844.9 L980.8 846.5 L983.0 849.2 L985.6 851.4 L987.1 854.7 L990.5 856.2 L992.5 859.0 L993.6 862.3 L993.9 865.6 L993.7 869.1 L993.2 872.5 L994.2 875.8 L991.9 878.9 L990.4 882.4 L989.0 886.0 L991.2 888.6 L994.0 890.6 L997.3 891.8 L1000.1 893.6 L1002.5 896.0 L1002.6 900.1 L1004.0 904.0" fill="none" stroke="#666" stroke-width="1.1"/>
<path d="M1126.3 904.0 L1126.8 901.0 L1125.8 898.0 L1126.9 895.0 L1126.6 892.0 L1126.7 889.0 L1127.0 886.0 L1129.2 883.8 L1131.5 881.7 L1133.7 879.6 L1136.4 878.0 L1138.9 876.1 L1141.9 874.9 L1143.8 872.4 L1146.0 870.2 L1149.3 869.7 L1151.2 867.0 L1154.0 865.7 L1155.9 868.1 L1156.9 871.0 L1158.6 873.6 L1160.7 875.8 L1163.5 876.8 L1166.6 877.4 L1169.1 879.1 L1172.0 880.1 L1174.5 882.0 L1177.5 882.5 L1180.7 883.4 L1183.6 885.0 L1186.3 887.2 L1189.9 887.3 L1192.6 889.3 L1193.2 893.0 L1193.0 896.7 L1193.5 900.4 L1194.3 904.0" fill="none" stroke="#666" stroke-width="1.1"/>
<path d="M1437.6 346.0 L1436.9 349.1 L1435.6 351.9 L1434.2 354.7 L1431.7 357.0 L1431.3 360.2 L1429.3 362.7 L1427.7 365.4 L1427.2 368.6 L1426.0 371.4 L1424.3 374.1 L1423.8 377.3 L1424.6 380.3 L1425.5 383.4 L1425.0 386.5 L1425.9 389.6 L1425.9 392.7 L1428.9 393.9 L1432.0 395.1 L1434.3 397.7 L1437.0 399.5 L1440.0 400.6 L1443.0 402.0 L1442.0 405.0 L1443.2 408.2 L1442.6 411.3 L1442.0 414.3 L1440.9 417.4 L1441.4 420.5 L1443.6 423.4 L1446.9 425.1 L1449.8 427.3 L1452.2 430.0 L1450.4 432.5 L1448.5 434.9 L1446.1 436.9 L1445.2 440.1 L1443.0 442.2 L1441.6 445.2 L1440.8 448.3 L1439.8 451.4 L1439.0 454.5 L1438.3 457.7 L1437.9 461.0 L1436.7 464.0 L1436.3 467.1 L1435.6 470.2 L1434.3 473.2 L1434.7 476.5 L1433.9 479.5 L1432.4 482.4 L1432.1 485.6 L1433.4 488.6 L1434.7 491.6 L1435.7 494.7 L1435.9 498.0 L1437.2 501.0 L1437.1 504.4 L1438.3 507.5 L1439.8 510.4 L1439.5 513.6 L1441.1 516.5 L1441.8 519.6 L1442.3 522.6 L1442.1 525.8 L1442.2 529.0 L1443.0 532.0 L1445.1 534.6 L1447.3 537.1 L1449.1 539.9 L1450.8 542.8 L1452.7 545.5 L1454.6 548.3 L1456.9 550.7 L1456.5 553.8 L1457.0 556.9 L1458.0 559.9 L1457.0 563.1 L1458.1 566.1 L1457.8 569.2 L1458.3 572.3 L1457.9 575.4 L1458.4 578.5" fill="none" stroke="#666" stroke-width="1.1"/>
<path d="M1644.3 346.0 L1646.6 348.5 L1648.5 351.2 L1650.4 354.0 L1652.5 356.6 L1653.5 360.0 L1655.8 362.5 L1658.1 365.0 L1659.8 367.9 L1662.2 370.1 L1663.9 373.1 L1666.8 374.9 L1669.1 377.2 L1671.4 379.2 L1672.6 382.2 L1674.7 384.3 L1676.2 387.0 L1679.3 388.4 L1680.8 391.1 L1682.3 393.8 L1684.6 395.8 L1687.5 397.6 L1690.5 399.0 L1694.2 399.1 L1697.1 400.8 L1700.3 401.8 L1703.4 403.2 L1706.3 405.0 L1709.5 405.1 L1712.5 403.9 L1715.7 403.9 L1718.7 402.4 L1721.8 402.0 L1724.8 400.7 L1727.2 398.4 L1729.7 396.4 L1732.8 395.4 L1735.7 393.8 L1737.7 391.0 L1740.8 389.9 L1743.4 388.0 L1746.4 390.1 L1749.8 391.5 L1752.8 393.7 L1755.8 395.8 L1757.0 398.8 L1757.5 401.9 L1758.0 405.0 L1758.1 408.2 L1758.9 411.3 L1762.1 410.5 L1764.9 408.8 L1768.2 408.2 L1771.3 407.4 L1774.4 407.9 L1777.5 408.5 L1780.7 407.7 L1783.8 407.9 L1786.9 407.7 L1790.0 408.2 L1792.7 405.8 L1794.7 402.8 L1796.4 399.6 L1799.2 397.3 L1802.1 395.9 L1805.4 395.6 L1808.5 395.1 L1811.7 394.4 L1814.5 392.8 L1817.7 392.1 L1821.0 392.2 L1824.0 391.1 L1825.4 393.8 L1826.8 396.5 L1828.0 399.3 L1828.3 402.5 L1830.2 405.0 L1831.0 408.1 L1831.1 411.2 L1832.0 414.3 L1832.4 417.4 L1832.2 420.6 L1833.3 423.6 L1835.2 426.1 L1838.3 427.1 L1840.8 428.7 L1842.7 431.2 L1845.6 432.3 L1848.2 433.9 L1849.8 436.9 L1852.7 438.1 L1855.0 440.0" fill="none" stroke="#666" stroke-width="1.1"/>
<path d="M1612.1 710.4 L1614.7 708.0 L1616.4 704.8 L1619.3 702.5 L1621.0 699.4 L1624.0 701.5 L1627.2 703.4 L1629.8 706.0 L1630.6 710.5 L1629.8 714.9 L1632.3 717.2 L1634.8 719.5 L1637.1 722.0 L1640.6 723.2 L1642.6 726.0 L1645.3 728.1 L1648.7 729.1 L1651.9 730.4 L1654.1 732.6 L1656.4 734.8 L1659.8 734.7 L1663.1 735.8 L1665.6 737.5 L1667.7 739.7 L1669.6 742.1 L1672.8 743.0 L1674.7 745.4 L1677.3 747.6 L1679.5 750.3 L1681.9 752.7 L1685.3 754.0 L1687.9 756.2 L1690.1 758.9 L1687.6 761.2 L1685.6 763.8 L1684.4 767.0 L1683.0 770.0 L1680.5 772.3 L1683.0 774.8 L1686.3 776.0 L1688.8 778.6 L1692.0 780.0 L1689.3 782.4 L1686.5 784.8 L1684.3 787.7 L1687.1 789.7 L1688.8 792.9 L1691.8 794.7 L1693.9 797.4 L1696.4 795.0 L1699.4 793.3 L1701.9 791.0 L1703.8 788.0 L1706.4 785.8 L1709.3 783.9 L1710.6 780.9 L1712.2 778.1 L1713.5 775.2 L1714.6 772.1 L1716.2 769.3 L1718.3 766.7 L1720.0 764.0 L1720.9 760.8 L1723.4 758.3 L1726.7 757.0 L1729.8 755.4 L1732.4 753.1 L1735.5 752.0 L1738.9 753.0 L1742.0 752.1 L1741.4 755.6 L1739.6 758.6 L1738.5 761.9 L1737.2 765.2 L1736.3 768.5 L1736.8 771.8 L1736.8 775.0 L1736.7 778.3 L1737.2 781.6 L1737.0 784.9 L1737.5 788.1 L1737.7 791.4 L1738.6 794.6 L1737.8 797.9 L1738.2 801.2 L1741.6 801.7 L1745.0 801.7 L1748.3 803.0 L1751.7 803.1 L1750.8 806.4 L1750.8 809.9 L1750.7 813.3 L1749.7 816.6 L1752.0 818.8 L1754.6 820.7 L1756.9 822.9 L1758.8 825.5 L1761.4 827.4 L1763.2 830.1 L1762.9 833.2 L1762.4 836.3 L1762.8 839.4 L1761.5 842.4 L1761.3 845.5 L1763.8 847.7 L1764.8 850.9 L1766.7 853.5 L1769.0 855.8 L1771.5 857.9 L1772.8 860.9 L1772.2 864.7 L1771.7 868.6 L1770.9 872.4 L1774.6 873.7 L1778.7 873.1 L1782.4 874.3 L1782.6 877.9 L1783.2 881.4 L1784.4 884.8 L1785.0 888.3 L1786.3 891.7 L1789.3 892.2 L1791.8 894.3 L1794.9 894.5 L1797.8 895.5 L1799.1 898.7 L1801.1 901.5 L1803.6 904.0" fill="none" stroke="#666" stroke-width="1.1"/>
<path d="M942.0 729.5 L944.0 725.7 L946.7 722.4 L949.1 718.8 L950.6 714.7 L953.1 711.2 L955.5 707.6 L957.7 703.8 L959.2 699.6 L961.9 696.1 L963.5 692.0" fill="none" stroke="#f2c98c" stroke-width="1.8" stroke-linejoin="round"/>
<path d="M999.2 685.8 L1004.1 682.7 L1009.3 680.0 L1013.3 680.5 L1017.4 679.9 L1021.4 680.4 L1025.4 681.0 L1029.5 680.7 L1033.4 683.0 L1037.2 685.6 L1040.8 688.3 L1044.6 690.8" fill="none" stroke="#f2c98c" stroke-width="1.8" stroke-linejoin="round"/>
<path d="M1079.9 690.8 L1084.4 690.6 L1088.9 690.3 L1093.4 690.8 L1094.8 686.8 L1096.5 682.8 L1098.9 679.2 L1100.3 675.2 L1102.2 671.4 L1103.5 667.3 L1103.0 663.1 L1103.4 658.9 L1102.6 654.7 L1102.8 650.5" fill="none" stroke="#f2c98c" stroke-width="1.8" stroke-linejoin="round"/>
<path d="M1138.1 639.7 L1140.0 635.4 L1142.0 631.2 L1143.8 626.9 L1148.3 628.5 L1152.6 630.6 L1157.2 632.0 L1161.3 633.7 L1165.5 635.4 L1169.7 637.0" fill="none" stroke="#f2c98c" stroke-width="1.8" stroke-linejoin="round"/>
<path d="M1205.0 638.7 L1209.2 639.6 L1213.6 639.4 L1217.8 640.4 L1221.7 641.5 L1225.8 641.8 L1229.9 642.3 L1233.8 643.3 L1237.9 643.7 L1241.0 646.9 L1243.3 650.8 L1246.5 653.9 L1249.5 657.1 L1252.1 660.7 L1255.3 663.9 L1258.1 667.3 L1262.6 668.9 L1266.8 671.4 L1271.4 672.7 L1275.5 675.4 L1280.0 677.0 L1284.0 675.6 L1288.1 674.9 L1292.3 674.1 L1296.2 672.5 L1300.0 674.3 L1303.8 676.0 L1307.7 677.4 L1311.7 678.8 L1315.5 680.6 L1319.1 682.7 L1323.0 683.9 L1326.7 685.8 L1330.6 687.2 L1334.3 688.8 L1338.0 690.7 L1342.1 691.5 L1345.9 693.1 L1349.5 695.0 L1353.6 695.9 L1357.2 697.9 L1361.5 698.3 L1365.7 699.5 L1370.0 700.1 L1374.2 701.2 L1378.5 701.9 L1382.7 703.0 L1386.9 703.5 L1391.2 704.0 L1395.4 704.0 L1399.6 704.9 L1403.9 705.1 L1408.1 705.6 L1412.1 703.7 L1416.5 702.8 L1420.4 700.6 L1424.5 698.9 L1428.6 697.2 L1433.0 696.1 L1437.2 694.7 L1441.2 692.8" fill="none" stroke="#f2c98c" stroke-width="1.8" stroke-linejoin="round"/>
<path d="M999.2 692.5 L1003.3 692.8 L1007.5 692.4 L1011.6 692.3 L1015.7 692.0 L1019.8 692.6 L1024.0 692.6 L1028.1 692.4 L1032.2 692.6 L1036.3 692.4 L1040.5 692.9 L1044.6 692.5 L1049.1 694.0 L1053.9 694.8 L1058.3 696.6 L1063.0 697.5 L1061.2 701.4 L1058.5 704.8 L1056.4 708.5 L1054.3 712.2 L1052.2 716.0 L1049.6 719.4 L1045.5 720.5 L1041.7 722.5 L1037.5 723.3 L1033.4 724.3 L1029.5 726.0 L1025.5 727.4 L1021.4 728.4 L1017.2 729.1 L1013.1 730.2 L1009.0 731.2 L1004.9 732.1 L1001.0 733.8 L996.8 734.5 L992.6 734.8 L988.4 735.0 L984.2 735.3 L979.9 734.6 L975.7 734.9 L971.5 735.1 L967.3 735.9 L963.1 735.2 L958.9 735.4 L954.6 735.8 L950.4 735.7 L946.2 736.1 L942.0 736.2" fill="none" stroke="#f2c98c" stroke-width="1.8" stroke-linejoin="round"/>
<path d="M958.8 739.6 L963.0 739.1 L967.2 738.8 L971.5 738.8 L975.7 738.4 L979.9 738.5 L984.1 738.7 L988.4 738.5 L992.6 738.4 L996.8 737.9" fill="none" stroke="#f2c98c" stroke-width="1.8" stroke-linejoin="round"/>
<path d="M1138.1 653.8 L1139.8 658.1 L1142.1 662.0 L1143.8 666.3 L1145.8 670.5 L1147.9 674.7 L1149.6 679.1 L1151.9 683.2 L1153.9 687.4 L1155.8 691.9 L1157.2 696.5" fill="none" stroke="#f2c98c" stroke-width="1.8" stroke-linejoin="round"/>
<path d="M1160.6 711.0 L1161.7 715.3 L1162.7 719.6 L1164.6 723.7 L1165.6 728.0 L1164.7 732.3 L1165.0 736.7 L1164.0 741.0 L1165.3 745.3 L1166.5 749.7 L1167.1 754.2 L1168.0 758.6 L1169.3 762.9 L1170.7 767.2" fill="none" stroke="#f2c98c" stroke-width="1.8" stroke-linejoin="round"/>
<path d="M1174.0 782.0 L1175.9 786.1 L1177.0 790.4 L1179.3 794.3 L1180.8 798.5 L1180.4 802.6 L1179.1 806.5 L1178.7 810.6 L1178.0 814.6 L1177.5 818.7 L1174.0 821.4 L1170.4 823.9 L1167.4 827.1 L1163.8 829.6 L1160.5 832.5 L1157.2 835.5 L1153.4 837.2 L1150.0 839.5" fill="none" stroke="#f2c98c" stroke-width="1.8" stroke-linejoin="round"/>
<path d="M1162.0 854.3 L1160.4 859.2 L1158.5 864.0 L1157.0 869.0 L1153.4 873.5 L1150.0 878.0 L1148.5 882.4 L1146.9 886.8 L1144.9 891.0 L1143.7 895.5 L1141.3 899.5 L1140.0 904.0" fill="none" stroke="#f2c98c" stroke-width="1.8" stroke-linejoin="round"/>
<path d="M1022.7 743.0 L1024.7 746.6 L1026.5 750.3 L1028.2 754.1 L1029.5 758.0 L1031.7 761.6 L1034.7 764.7 L1037.4 767.9 L1039.6 771.5 L1040.9 775.4 L1041.7 779.4 L1041.9 783.5 L1042.9 787.4" fill="none" stroke="#f2c98c" stroke-width="1.8" stroke-linejoin="round"/>
<path d="M1053.0 802.2 L1056.3 805.6 L1059.6 808.9 L1062.9 812.3 L1066.7 815.1 L1069.8 818.7 L1069.8 823.4 L1070.2 828.1 L1069.9 832.8 L1070.0 837.5 L1070.5 842.2 L1071.6 846.3 L1073.8 850.0 L1074.4 854.2 L1076.2 858.0 L1077.7 861.8 L1079.6 865.5 L1082.2 868.7 L1084.1 872.4 L1086.0 876.0 L1087.6 879.8" fill="none" stroke="#f2c98c" stroke-width="1.8" stroke-linejoin="round"/>
<path d="M1087.6 879.8 L1083.0 880.1 L1078.4 879.2 L1073.8 879.1 L1069.2 879.1 L1064.6 878.8 L1060.0 879.0 L1055.8 880.0 L1051.8 881.5 L1047.7 882.8 L1043.5 884.0 L1039.2 884.5 L1035.2 886.2 L1031.0 887.2 L1026.9 888.2 L1022.7 889.3 L1020.3 892.6 L1017.4 895.3 L1014.6 898.3 L1011.6 900.9 L1009.0 904.0" fill="none" stroke="#f2c98c" stroke-width="1.8" stroke-linejoin="round"/>
<path d="M1160.7 852.2 L1164.7 854.0 L1168.6 855.9 L1172.3 858.5 L1176.4 860.0 L1180.2 862.3 L1184.2 864.0 L1188.4 865.4 L1192.2 867.7 L1196.1 869.7 L1200.0 871.7 L1203.8 873.0 L1207.8 873.6 L1211.6 875.0 L1215.6 875.8 L1219.9 874.3 L1224.1 872.4 L1228.6 871.5 L1232.6 869.2 L1237.0 868.0 L1239.1 864.5 L1240.3 860.7 L1242.0 857.0 L1243.9 853.5 L1246.0 850.0" fill="none" stroke="#f2c98c" stroke-width="1.8" stroke-linejoin="round"/>
<path d="M1087.6 879.8 L1091.6 881.1 L1095.6 882.3 L1100.0 882.4 L1103.9 884.0 L1108.0 885.0 L1111.0 888.7 L1113.8 892.7 L1117.2 896.1 L1120.0 900.0" fill="none" stroke="#f2c98c" stroke-width="1.8" stroke-linejoin="round"/>
<path d="M1102.8 653.8 L1106.9 654.9 L1111.0 655.8 L1115.0 657.0 L1120.1 656.0 L1124.9 654.1 L1130.0 653.0 L1134.3 650.4 L1138.1 647.0" fill="none" stroke="#f2c98c" stroke-width="1.8" stroke-linejoin="round"/>
<path d="M1079.9 693.0 L1084.3 693.5 L1088.7 694.1 L1093.0 695.0 L1097.3 693.4 L1101.5 691.5 L1105.6 689.4 L1110.0 688.0 L1111.7 683.8 L1112.8 679.5 L1115.1 675.5 L1116.6 671.3 L1118.0 667.0 L1120.6 663.8 L1122.8 660.4 L1125.0 657.0" fill="none" stroke="#f2c98c" stroke-width="1.8" stroke-linejoin="round"/>
<path d="M1138.1 643.0 L1142.1 642.3 L1146.0 641.7 L1150.0 641.1 L1154.1 641.0 L1158.0 640.0 L1163.9 640.1 L1169.7 641.0" fill="none" stroke="#f2c98c" stroke-width="1.8" stroke-linejoin="round"/>
<path d="M942.0 737.5 L946.2 739.4 L950.8 740.1 L955.0 742.0 L959.0 741.9 L963.0 742.2 L967.0 743.0 L971.0 742.8 L975.0 743.0 L979.3 742.3 L983.8 742.2 L988.0 740.9 L992.4 740.6 L996.8 740.0" fill="none" stroke="#f2c98c" stroke-width="1.8" stroke-linejoin="round"/>
<path d="M1157.2 852.0 L1161.2 854.0 L1165.2 856.2 L1169.3 858.2 L1173.4 860.1 L1177.5 862.0 L1181.5 864.5 L1185.4 867.1 L1189.4 869.5 L1192.9 872.7 L1197.0 875.0 L1201.6 876.0 L1206.2 876.8 L1210.9 877.1 L1215.4 878.1 L1220.0 879.0 L1223.5 877.0 L1226.8 874.7 L1230.0 872.1 L1233.6 870.2 L1237.0 868.0 L1239.6 864.9 L1241.5 861.2 L1243.7 857.8 L1246.2 854.6 L1248.8 851.4 L1251.3 848.2 L1253.1 844.5 L1255.4 841.1 L1258.0 838.0 L1263.4 837.2 L1268.9 837.0" fill="none" stroke="#f2c98c" stroke-width="1.8" stroke-linejoin="round"/>
<path d="M1162.0 848.0 L1165.7 846.3 L1169.5 845.0 L1173.1 843.2 L1177.0 842.0 L1181.2 838.9 L1185.5 835.7 L1190.0 833.0 L1189.1 827.9 L1187.6 822.9 L1186.0 818.0 L1182.7 813.2 L1180.0 808.0 L1181.9 803.1 L1183.0 798.0" fill="none" stroke="#f2c98c" stroke-width="1.8" stroke-linejoin="round"/>
<path d="M1109.0 875.0 L1113.1 873.6 L1117.4 872.9 L1121.7 872.5 L1125.9 871.3 L1130.0 870.0 L1134.0 870.6 L1138.0 870.7 L1142.0 870.9 L1146.0 871.7 L1150.0 872.0 L1153.9 870.2 L1157.9 868.9 L1162.0 867.7 L1165.8 866.0 L1170.0 865.0 L1174.0 863.1 L1178.1 861.7 L1182.1 859.8 L1186.0 857.8 L1190.0 856.0" fill="none" stroke="#f2c98c" stroke-width="1.8" stroke-linejoin="round"/>
<path d="M1230.0 844.0 L1233.8 841.1 L1237.5 838.0 L1241.0 834.7 L1245.0 832.0 L1248.3 829.1 L1251.4 825.9 L1254.9 823.2 L1258.0 820.0 L1261.8 817.3 L1265.0 813.9 L1268.5 811.1 L1272.0 808.0" fill="none" stroke="#f2c98c" stroke-width="1.8" stroke-linejoin="round"/>
<path d="M1276.0 830.0 L1278.0 826.4 L1279.4 822.5 L1281.0 818.6 L1283.2 815.1 L1285.1 811.4 L1286.7 807.6 L1288.4 803.8 L1290.0 800.0 L1293.6 796.9 L1296.8 793.5 L1300.0 790.0 L1302.3 786.7 L1304.4 783.3 L1306.5 779.9 L1309.0 776.7 L1310.8 773.1 L1313.3 770.0 L1315.8 766.8 L1318.0 763.5 L1320.0 760.0 L1322.4 756.7 L1324.5 753.2 L1326.9 750.0 L1329.3 746.6 L1331.8 743.4 L1334.0 740.0 L1336.5 736.3 L1339.3 732.9 L1342.1 729.5 L1344.1 725.4 L1347.0 722.0 L1351.5 721.7 L1356.0 721.3 L1360.5 720.4 L1365.0 720.0" fill="none" stroke="#f2c98c" stroke-width="1.8" stroke-linejoin="round"/>
<path d="M1405.0 904.0 L1408.6 901.3 L1412.4 898.9 L1415.4 895.5 L1419.3 893.2 L1422.7 890.2 L1426.6 887.9 L1430.0 885.0 L1433.8 883.4 L1437.2 881.0 L1440.5 878.7 L1444.3 877.1 L1447.9 875.0 L1451.5 873.2 L1455.0 871.0 L1459.3 869.9 L1463.5 868.9 L1467.8 867.9 L1472.0 866.5 L1476.2 865.3 L1480.6 864.7 L1484.7 862.8 L1489.0 862.0 L1493.0 860.0 L1496.7 857.7 L1500.8 855.9 L1504.3 853.2 L1508.6 851.8 L1512.2 849.1 L1515.9 846.7 L1520.0 845.0 L1523.8 843.0 L1527.7 841.3 L1531.4 839.1 L1535.4 837.6 L1539.3 835.8 L1543.3 834.2 L1547.0 832.1 L1550.8 830.2 L1554.8 828.6" fill="none" stroke="#f2c98c" stroke-width="1.8" stroke-linejoin="round"/>
<path d="M1489.0 867.0 L1494.5 867.2 L1500.0 868.0 L1504.1 868.2 L1508.2 868.4 L1512.3 868.0 L1516.4 867.7 L1520.5 868.3 L1524.6 867.9 L1528.7 867.7 L1532.8 867.6 L1536.9 868.3 L1541.0 868.0 L1544.5 871.6 L1548.2 874.8 L1552.0 878.0 L1554.0 881.7 L1555.9 885.5 L1558.2 889.1 L1560.0 893.0 L1561.2 896.9 L1563.5 900.3 L1565.0 904.0" fill="none" stroke="#f2c98c" stroke-width="1.8" stroke-linejoin="round"/>
<path d="M1415.0 880.0 L1416.6 876.3 L1418.2 872.6 L1419.6 868.8 L1420.7 864.9 L1422.0 861.0 L1423.7 857.4 L1424.8 853.4 L1426.9 849.9 L1428.0 846.0 L1432.7 846.5 L1437.3 847.7 L1442.0 848.0 L1445.7 849.8 L1449.3 851.9 L1452.9 853.8 L1456.4 855.9 L1460.0 858.0 L1463.9 860.0 L1467.8 862.1 L1471.1 864.9 L1475.0 867.0" fill="none" stroke="#f2c98c" stroke-width="1.8" stroke-linejoin="round"/>
<path d="M1242.0 904.0 L1243.4 900.1 L1245.0 896.3 L1246.6 892.5 L1248.4 888.8 L1250.0 885.0 L1251.4 881.2 L1253.1 877.6 L1254.6 873.8 L1256.0 870.0" fill="none" stroke="#f2c98c" stroke-width="1.8" stroke-linejoin="round"/>
<path d="M1150.0 904.0 L1153.2 900.9 L1157.0 898.3 L1160.0 895.0 L1164.2 893.3 L1167.8 890.6 L1172.1 889.3 L1176.2 887.4 L1180.0 885.0" fill="none" stroke="#f2c98c" stroke-width="1.8" stroke-linejoin="round"/>
<path d="M1781.7 346.0 L1781.4 350.9 L1781.7 355.8 L1778.0 358.7 L1773.7 360.7 L1769.9 363.5 L1766.4 366.6 L1762.2 368.8" fill="none" stroke="#f2c98c" stroke-width="1.8" stroke-linejoin="round"/>
<path d="M1740.0 346.0 L1745.0 352.0 L1749.6 354.3 L1753.4 357.7 L1758.0 360.0" fill="none" stroke="#f2c98c" stroke-width="1.8" stroke-linejoin="round"/>
<path d="M1178.1 402.8 L1180.6 406.2 L1183.5 409.3 L1186.2 412.5 L1188.8 415.9 L1191.4 419.2 L1193.5 422.9 L1196.5 425.9 L1199.3 429.1 L1201.3 432.9 L1204.2 436.0 L1206.3 440.0 L1209.2 443.5 L1211.0 447.8 L1213.7 451.4 L1217.7 452.7 L1221.7 454.0 L1225.8 455.1 L1229.8 456.5 L1233.9 457.6 L1237.9 458.8 L1242.1 459.7 L1244.3 463.3 L1245.7 467.3 L1247.7 471.1 L1249.4 474.9 L1251.5 478.6 L1256.3 479.3 L1261.0 480.6 L1265.8 481.0 L1269.3 483.8 L1273.0 486.3 L1276.6 489.0 L1280.2 491.7 L1283.6 494.7 L1287.1 497.5" fill="none" stroke="#f2c98c" stroke-width="1.8" stroke-linejoin="round"/>
<path d="M1384.6 346.0 L1384.5 350.4 L1383.6 354.8 L1383.4 359.2 L1382.5 363.5 L1382.0 367.9 L1382.3 371.9 L1382.6 375.9 L1382.6 380.0 L1383.8 383.9 L1383.6 388.0 L1383.1 392.3 L1383.3 396.5 L1383.1 400.8 L1382.8 405.1 L1382.5 409.3 L1382.8 413.6 L1382.6 417.9 L1381.9 422.1 L1382.6 426.4 L1382.0 430.7 L1381.4 435.4 L1380.9 440.0 L1380.5 444.7" fill="none" stroke="#f2c98c" stroke-width="1.8" stroke-linejoin="round"/>
<path d="M1375.0 459.3 L1374.8 464.5 L1378.6 466.3 L1381.8 469.0 L1385.3 471.3 L1388.7 473.7 L1392.6 475.4 L1395.8 478.2 L1399.6 480.0 L1401.7 484.0 L1403.7 488.0 L1405.8 492.0 L1408.2 495.7 L1411.6 498.7 L1413.8 502.6 L1416.6 506.1 L1419.5 509.4 L1421.8 513.2 L1424.9 516.4 L1427.5 520.0 L1428.5 524.1 L1429.5 528.2 L1430.3 532.3 L1431.8 536.3 L1432.6 540.4 L1433.6 544.5" fill="none" stroke="#f2c98c" stroke-width="1.8" stroke-linejoin="round"/>
<path d="M1433.5 560.0 L1434.0 564.4 L1434.2 568.8 L1434.4 573.2 L1435.3 577.5 L1435.5 581.9 L1434.0 585.8 L1433.2 589.9 L1431.9 593.8 L1430.9 597.9 L1429.5 601.8 L1429.0 605.8 L1428.0 609.7 L1427.8 613.7 L1427.5 617.7 L1428.8 621.8 L1430.9 625.6 L1432.5 629.6 L1434.1 633.5 L1435.5 637.6 L1437.4 641.6 L1439.5 645.6" fill="none" stroke="#f2c98c" stroke-width="1.8" stroke-linejoin="round"/>
<path d="M1471.4 665.5 L1475.4 664.6 L1479.4 663.8 L1483.2 662.1 L1487.4 661.7 L1491.4 660.9 L1495.3 659.5 L1499.3 658.5 L1503.4 659.1 L1507.3 660.3 L1511.4 661.0 L1515.3 662.2 L1519.2 663.5 L1524.2 663.9 L1529.2 663.6 L1534.1 663.7 L1539.1 663.5 L1542.9 664.8 L1546.8 665.9 L1550.8 666.6 L1554.7 667.6 L1558.6 668.7 L1562.5 669.7 L1566.5 670.6 L1570.4 671.7 L1574.4 672.3 L1578.2 673.7 L1582.2 674.5 L1586.0 675.8 L1590.1 676.2 L1593.9 677.6 L1597.7 679.8 L1601.4 682.2 L1604.6 685.3 L1608.1 687.9 L1612.0 690.0" fill="none" stroke="#f2c98c" stroke-width="1.8" stroke-linejoin="round"/>
<path d="M1431.5 685.4 L1427.2 684.3 L1422.8 683.6 L1418.6 682.1 L1414.3 681.2 L1409.9 680.4 L1405.6 679.5 L1401.6 678.7 L1397.7 677.5" fill="none" stroke="#f2c98c" stroke-width="1.8" stroke-linejoin="round"/>
<path d="M1437.5 697.4 L1433.6 700.2 L1429.6 702.7 L1425.6 705.3 L1421.2 706.3 L1416.8 707.0 L1412.4 707.6 L1407.9 708.1 L1403.6 709.3 L1398.9 710.3 L1394.2 710.3 L1389.5 711.4 L1384.8 711.8 L1380.0 712.0 L1376.1 710.3 L1372.0 709.1 L1368.1 707.4 L1364.0 706.5 L1360.0 705.0 L1355.9 705.0 L1352.0 704.1 L1348.0 703.4 L1344.1 702.6 L1340.1 702.0 L1336.0 702.0 L1332.0 701.6 L1328.0 701.4 L1324.0 700.4 L1320.0 700.0 L1315.9 698.3 L1311.8 696.3 L1307.8 694.4 L1303.8 692.4 L1300.0 690.0" fill="none" stroke="#f2c98c" stroke-width="1.8" stroke-linejoin="round"/>
<path d="M1347.3 722.6 L1344.0 725.2 L1341.2 728.3 L1337.5 730.3 L1334.9 733.7 L1331.5 736.1 L1327.0 740.6 L1323.2 742.1 L1320.0 744.5 L1316.4 746.4 L1312.5 747.6 L1309.0 749.6 L1306.5 752.9 L1303.4 755.8 L1301.1 759.3 L1298.5 762.5 L1295.4 765.4 L1292.9 768.6 L1290.7 772.0 L1288.4 775.4 L1286.2 778.8 L1284.5 782.5 L1281.9 785.7 L1278.8 789.2 L1275.8 792.7 L1273.0 796.5 L1270.0 800.0" fill="none" stroke="#f2c98c" stroke-width="1.8" stroke-linejoin="round"/>
<path d="M1475.0 760.0 L1475.0 764.0 L1476.1 768.0 L1475.8 772.0 L1476.5 776.0 L1477.6 779.9 L1478.0 783.9 L1477.8 788.0 L1478.0 792.0 L1479.2 796.0 L1479.4 800.0 L1479.4 804.0 L1480.0 808.0 L1481.0 811.9 L1480.9 816.1 L1481.9 820.0 L1482.9 823.9 L1483.3 828.0 L1483.7 832.0 L1484.4 836.0 L1485.0 840.0" fill="none" stroke="#f2c98c" stroke-width="1.8" stroke-linejoin="round"/>
<path d="M1489.2 877.3 L1486.9 873.8 L1484.1 870.7 L1482.2 866.9 L1479.5 863.7 L1477.3 860.2 L1474.9 856.8 L1472.3 853.5 L1470.0 850.0 L1466.6 847.1 L1463.5 843.8 L1460.3 840.7 L1456.9 837.8 L1453.4 835.0 L1450.0 832.0 L1446.1 834.8 L1442.2 837.6 L1437.7 839.4 L1433.9 842.2 L1430.0 845.0 L1427.6 848.4 L1425.9 852.2 L1423.5 855.7 L1421.0 859.0 L1419.0 862.7 L1417.1 866.4 L1415.0 870.0 L1413.9 874.3 L1412.6 878.5 L1410.9 882.6 L1410.1 887.0 L1408.6 891.2 L1407.4 895.5 L1405.9 899.6 L1405.0 904.0" fill="none" stroke="#f2c98c" stroke-width="1.8" stroke-linejoin="round"/>
<path d="M1554.8 843.0 L1558.2 845.7 L1562.1 847.7 L1565.9 849.9 L1569.3 852.5 L1572.8 855.1 L1576.4 857.6 L1580.0 860.0 L1581.4 863.8 L1583.0 867.5 L1585.4 870.8 L1586.4 874.8 L1588.0 878.5 L1589.7 882.2 L1591.6 885.7 L1593.5 889.2 L1594.7 893.1 L1596.4 896.8 L1598.2 900.4 L1600.0 904.0" fill="none" stroke="#f2c98c" stroke-width="1.8" stroke-linejoin="round"/>
<path d="M1729.0 456.0 L1725.0 458.5 L1721.5 461.7 L1717.8 464.7 L1713.8 467.2 L1710.0 470.0 L1711.0 476.0 L1709.5 480.3 L1708.8 484.7 L1707.1 488.9 L1705.7 493.2 L1705.1 497.7 L1703.6 502.0 L1701.6 505.7 L1699.6 509.3 L1697.8 513.2 L1696.1 517.0 L1694.1 520.7 L1691.7 524.2 L1690.0 528.0 L1686.7 531.1 L1683.8 534.6 L1681.0 538.2 L1677.6 541.2 L1674.1 543.4 L1670.9 545.9 L1668.0 548.8 L1664.5 551.0 L1661.0 553.2 L1658.0 556.0 L1655.3 559.3 L1653.1 563.0 L1650.7 566.5 L1648.3 570.0 L1646.7 573.9 L1645.6 577.9 L1644.1 581.8 L1642.7 585.7 L1640.7 589.5 L1639.5 593.5 L1637.9 597.3 L1636.5 601.3 L1634.9 605.2 L1633.8 609.2 L1632.0 613.0 L1632.2 617.5 L1631.0 622.0 L1631.3 626.5 L1631.3 631.0 L1630.5 635.5 L1630.4 640.0" fill="none" stroke="#f2c98c" stroke-width="1.8" stroke-linejoin="round"/>
<path d="M1855.0 518.0 L1852.3 521.7 L1850.3 525.9 L1847.4 529.5 L1845.1 533.6 L1842.5 537.3 L1840.0 541.2 L1837.1 544.5 L1833.8 547.4 L1829.9 549.7 L1827.0 553.0 L1824.8 556.7 L1823.3 560.8 L1821.4 564.6 L1819.8 568.6 L1817.5 572.3 L1815.9 576.3 L1814.0 580.2 L1812.3 584.0 L1811.2 588.0 L1809.9 592.0 L1808.5 595.9 L1807.7 600.0 L1805.8 603.9 L1803.8 607.8 L1801.5 611.5 L1799.4 615.4 L1797.0 619.0" fill="none" stroke="#f2c98c" stroke-width="1.8" stroke-linejoin="round"/>
<path d="M1658.0 560.0 L1656.4 564.7 L1654.4 569.2 L1651.9 573.5 L1650.0 578.0 L1648.5 582.2 L1647.8 586.5 L1646.2 590.6 L1645.1 594.9 L1644.8 599.4 L1643.2 603.5 L1642.2 607.8 L1641.0 612.0 L1640.8 616.1 L1639.4 619.9 L1639.6 624.0 L1638.7 628.0 L1638.1 632.0 L1637.2 635.9 L1636.9 640.0 L1636.7 644.0 L1636.0 648.0 L1635.8 652.0 L1635.8 656.0 L1634.8 660.0 L1634.5 664.0 L1635.0 668.0 L1635.0 672.0 L1634.5 676.0 L1634.0 680.0 L1634.1 684.0 L1633.6 688.0 L1633.6 692.0 L1633.7 696.0 L1634.0 700.0 L1630.4 702.8 L1626.2 704.6 L1622.5 707.0 L1618.7 709.5 L1615.0 712.0" fill="none" stroke="#f2c98c" stroke-width="1.8" stroke-linejoin="round"/>
<path d="M1807.0 560.0 L1803.6 564.1 L1801.4 568.9 L1798.0 573.0 L1798.0 577.5 L1797.1 582.0 L1796.6 586.5 L1796.5 591.0 L1796.5 595.5 L1796.0 600.0 L1792.9 603.6 L1789.8 607.2 L1787.0 611.0 L1784.8 614.7 L1782.0 618.0" fill="none" stroke="#f2c98c" stroke-width="1.8" stroke-linejoin="round"/>
<path d="M1802.4 641.9 L1806.3 643.0 L1810.1 644.2 L1813.9 645.3 L1817.6 646.9 L1821.5 647.9 L1825.3 649.2 L1829.0 650.7 L1833.0 652.0 L1836.6 654.2 L1840.7 655.2 L1844.4 657.3 L1847.8 659.7 L1851.6 661.5 L1855.0 664.0" fill="none" stroke="#f2c98c" stroke-width="1.8" stroke-linejoin="round"/>
<path d="M1771.0 655.0 L1768.1 658.3 L1764.2 660.7 L1761.4 664.2 L1757.7 666.7 L1754.5 669.7 L1751.2 672.7 L1748.5 676.3 L1745.0 679.0 L1743.4 683.7 L1742.0 688.5 L1740.0 693.0 L1736.5 695.4 L1733.3 698.2 L1730.2 701.2 L1727.0 704.0 L1723.9 706.9 L1720.3 709.3 L1717.3 712.3 L1714.0 715.0 L1711.1 718.5 L1708.7 722.4 L1705.8 726.0 L1703.1 729.7 L1700.0 733.0 L1697.8 736.6 L1696.0 740.3 L1694.0 744.0" fill="none" stroke="#f2c98c" stroke-width="1.8" stroke-linejoin="round"/>
<path d="M1697.0 745.0 L1694.6 748.2 L1691.3 750.8 L1689.1 754.2 L1686.3 757.1 L1683.8 760.2 L1681.0 763.2 L1677.8 765.8 L1675.5 769.1 L1672.9 772.2 L1670.0 775.0 L1667.4 779.0 L1665.0 783.1 L1661.9 786.8 L1659.9 791.2 L1657.0 795.0 L1655.2 798.7 L1654.7 802.9 L1652.5 806.5 L1651.3 810.4 L1650.4 814.5 L1648.8 818.3 L1647.6 822.2 L1646.0 826.0 L1650.1 828.8 L1654.0 832.0 L1651.9 836.5 L1649.5 840.7 L1647.0 845.0 L1644.4 848.8 L1642.2 852.8 L1640.0 856.8 L1638.6 861.2 L1636.0 865.0 L1634.2 868.8 L1631.7 872.3 L1630.4 876.5 L1628.0 880.0" fill="none" stroke="#f2c98c" stroke-width="1.8" stroke-linejoin="round"/>
<path d="M1830.6 847.5 L1826.9 849.5 L1823.6 852.1 L1819.6 853.7 L1816.6 856.7 L1812.6 858.2 L1809.2 860.8 L1805.8 863.1 L1802.0 865.0 L1798.2 867.6 L1793.8 869.1 L1790.0 871.6 L1786.2 874.1 L1782.0 876.0" fill="none" stroke="#f2c98c" stroke-width="1.8" stroke-linejoin="round"/>
<path d="M1612.0 710.0 L1615.6 714.5 L1619.0 719.0 L1620.1 723.6 L1622.3 727.9 L1623.4 732.5 L1625.0 737.0 L1629.2 737.1 L1633.3 737.5 L1637.3 738.6 L1641.4 738.9 L1645.6 738.9 L1649.7 739.6 L1654.1 739.7 L1658.4 740.1 L1662.7 741.1 L1667.0 741.5 L1670.9 742.9 L1674.8 744.2 L1678.7 745.6 L1682.4 747.3 L1686.2 749.3 L1690.0 751.4 L1693.9 753.1 L1697.7 754.7 L1701.6 755.7 L1705.5 756.9 L1710.3 757.1 L1715.1 757.5 L1719.9 758.6 L1724.7 758.9 L1726.7 762.7 L1728.6 766.6 L1732.3 770.0 L1736.6 772.7 L1740.1 776.2 L1743.8 778.0 L1747.9 779.1 L1751.6 781.1 L1755.4 782.7 L1759.4 783.9 L1763.7 785.3 L1768.0 786.8 L1772.6 788.8 L1776.7 791.6 L1780.3 794.8 L1784.4 797.3 L1788.0 800.5 L1792.1 803.1 L1796.1 805.2 L1799.9 807.5 L1803.4 810.3 L1807.5 812.3 L1811.3 814.7 L1815.3 816.7 L1819.1 819.2 L1822.8 821.7 L1827.0 823.5 L1830.6 826.2 L1834.7 825.6 L1838.7 824.9 L1842.8 824.3 L1846.8 823.3 L1851.0 823.2 L1855.0 822.4" fill="none" stroke="#f2c98c" stroke-width="1.8" stroke-linejoin="round"/>
<path d="M1049.6 719.4 L1052.3 723.0 L1055.2 726.4 L1058.6 729.4 L1061.4 732.9 L1063.1 740.6" fill="none" stroke="#f4af33" stroke-width="2" stroke-linejoin="round"/>
<path d="M1087.3 755.4 L1090.3 758.7 L1093.7 761.6 L1096.7 764.8 L1096.9 769.0 L1098.0 773.2 L1097.6 777.4 L1098.4 781.6 L1097.7 786.0 L1098.0 790.4 L1097.8 794.7 L1097.6 799.1 L1097.4 803.5" fill="none" stroke="#f4af33" stroke-width="2" stroke-linejoin="round"/>
<path d="M1093.4 818.6 L1091.7 823.6 L1090.0 828.7 L1089.3 833.3 L1087.3 837.6 L1086.6 842.2 L1086.6 846.9 L1086.3 851.6 L1086.0 856.3 L1085.6 861.0 L1085.0 865.7 L1085.6 870.5 L1087.2 875.0 L1087.6 879.8 L1089.0 883.7 L1089.3 887.9 L1090.8 891.8 L1091.9 895.8 L1092.3 900.0 L1093.4 904.0" fill="none" stroke="#f4af33" stroke-width="2" stroke-linejoin="round"/>
<path d="M1116.9 875.8 L1120.3 872.5 L1123.7 869.1 L1127.2 865.9 L1130.4 862.4 L1134.2 860.7 L1138.4 860.2 L1142.3 858.7 L1146.1 856.8 L1150.0 855.5 L1154.1 854.6 L1158.1 853.3 L1162.0 852.0 L1166.1 850.9 L1170.2 849.8 L1174.4 849.1 L1178.4 847.9 L1182.7 847.4 L1186.9 846.8 L1190.9 845.5 L1195.1 844.8 L1199.4 844.9 L1203.7 844.8 L1208.0 843.8 L1212.3 844.2 L1216.6 844.0 L1220.8 843.1 L1225.1 842.8 L1229.4 842.9 L1233.6 842.2" fill="none" stroke="#f4af33" stroke-width="2" stroke-linejoin="round"/>
<path d="M1268.9 837.0 L1272.6 835.4 L1276.3 833.6 L1280.0 832.0 L1281.9 828.2 L1283.2 824.2 L1284.2 820.1 L1285.6 816.1 L1287.1 812.2 L1288.7 808.3 L1291.3 804.5 L1294.4 801.0 L1296.8 797.2 L1299.6 793.5 L1302.1 789.6 L1304.5 785.7 L1307.7 782.7 L1310.0 779.0 L1313.2 776.1 L1316.4 773.1 L1319.3 769.9 L1321.7 766.2 L1324.8 763.2 L1328.0 760.6 L1331.3 758.1 L1334.4 755.3 L1337.7 752.9 L1340.6 749.9 L1344.0 747.6 L1347.3 745.1 L1351.0 742.1 L1354.4 738.7 L1358.2 735.8 L1362.4 733.4 L1365.8 730.0 L1370.1 729.0 L1374.5 727.9 L1378.7 726.4 L1383.0 725.3 L1387.3 724.2 L1391.5 722.9 L1395.7 721.3 L1400.1 718.9 L1405.0 717.4 L1409.6 715.3 L1413.5 714.3 L1417.6 714.0 L1421.5 712.8 L1425.6 712.3 L1429.6 712.0 L1433.5 710.9 L1437.5 709.8 L1441.5 709.3" fill="none" stroke="#f4af33" stroke-width="2" stroke-linejoin="round"/>
<path d="M1087.6 879.8 L1092.1 879.9 L1096.6 879.8 L1101.0 880.4 L1105.5 879.7 L1110.0 880.0 L1114.3 882.4 L1118.3 885.3 L1122.7 887.4 L1126.7 890.3 L1131.2 892.1 L1135.7 894.1 L1140.4 895.3 L1145.0 897.0 L1149.2 897.9 L1153.3 899.3 L1157.5 900.5 L1161.8 901.3 L1165.9 902.5 L1170.0 904.0" fill="none" stroke="#f4af33" stroke-width="2" stroke-linejoin="round"/>
<path d="M1287.1 497.5 L1289.3 501.1 L1291.0 505.0 L1292.8 508.9 L1294.8 512.6 L1296.5 516.5 L1299.6 519.9 L1302.7 523.3 L1305.2 527.1 L1307.9 530.8 L1311.0 534.2 L1314.0 537.6 L1317.6 539.7 L1321.2 541.9 L1325.1 543.5 L1328.5 546.0 L1332.3 547.9 L1335.9 550.0 L1339.3 552.3 L1342.7 554.6 L1346.2 556.8 L1349.7 558.9 L1353.1 561.1 L1356.5 563.4 L1359.8 565.9 L1363.0 568.6 L1366.4 571.3 L1369.5 574.2 L1373.1 576.5 L1376.1 579.5 L1379.0 582.6 L1382.6 584.9 L1385.7 587.8 L1388.6 590.6 L1391.7 593.3 L1394.8 595.9 L1397.3 599.2 L1400.8 601.4 L1403.4 604.5 L1406.8 606.8 L1409.6 609.8 L1413.8 611.9 L1417.4 615.1 L1421.6 617.2 L1425.6 619.7 L1427.3 623.5 L1428.3 627.6 L1429.6 631.6 L1430.6 635.7 L1432.6 639.5 L1433.5 643.6" fill="none" stroke="#f4af33" stroke-width="2" stroke-linejoin="round"/>
<path d="M1467.4 677.5 L1471.8 677.0 L1476.2 677.6 L1480.6 677.1 L1484.9 676.4 L1489.3 676.5 L1493.6 677.0 L1497.9 677.8 L1502.1 678.8 L1506.4 679.4 L1510.6 680.3 L1514.9 681.0 L1519.2 681.4 L1523.7 681.4 L1528.3 681.6 L1532.8 681.6 L1537.4 681.7 L1541.9 681.4 L1546.5 681.7 L1551.0 681.4 L1555.4 680.8 L1559.9 680.2 L1564.1 678.6 L1568.7 678.6 L1572.9 676.9 L1577.4 676.9 L1581.8 675.9 L1586.2 675.0 L1590.0 675.0 L1594.0 674.0 L1598.1 673.4 L1602.1 672.1 L1606.1 670.9 L1610.2 670.3 L1614.2 669.4 L1618.2 668.1 L1622.1 666.9 L1626.2 666.0 L1630.2 665.0 L1634.2 664.0 L1638.3 663.0 L1642.3 661.4 L1646.3 660.3 L1650.4 659.3 L1654.5 657.9 L1658.5 656.6 L1662.7 655.9 L1666.8 654.7 L1670.7 653.2 L1674.8 651.9 L1678.8 650.5 L1682.9 649.6 L1687.0 648.8 L1691.0 648.1 L1695.2 647.9 L1699.3 647.3 L1703.3 646.2 L1707.5 646.5 L1711.5 645.3 L1715.6 645.2 L1719.7 644.6 L1723.8 644.1 L1727.8 642.8 L1731.9 642.4 L1736.0 641.9 L1740.2 642.3 L1744.3 641.4 L1748.5 641.4 L1752.6 642.0 L1756.8 641.9 L1760.9 642.3 L1765.0 642.2 L1769.2 641.9" fill="none" stroke="#f4af33" stroke-width="2" stroke-linejoin="round"/>
<path d="M1470.5 677.6 L1470.1 682.0 L1469.4 686.5 L1469.5 690.9 L1469.2 695.4 L1469.4 700.0 L1469.5 704.6 L1470.1 709.1 L1470.4 713.7 L1470.5 718.3 L1470.6 722.3 L1471.0 726.3 L1470.6 730.3 L1471.0 734.3 L1471.3 738.3 L1471.9 742.3 L1471.7 746.3 L1472.8 751.3 L1473.7 756.4 L1474.1 760.4 L1474.3 764.4 L1474.7 768.4 L1474.7 772.4 L1475.0 776.4 L1475.8 780.4 L1476.2 784.3 L1476.3 788.3 L1476.3 792.4 L1477.3 796.3 L1477.5 800.3 L1477.5 804.3 L1478.2 808.3 L1479.3 812.8 L1479.9 817.3 L1480.0 821.9 L1480.9 826.4 L1481.9 830.9 L1482.7 835.4 L1483.9 839.5 L1484.0 843.9 L1485.0 848.1 L1485.7 852.4 L1486.4 856.6 L1487.3 860.8 L1488.6 865.0 L1489.4 869.2 L1491.0 873.0 L1492.1 876.9 L1493.2 880.8 L1494.4 884.7 L1496.0 888.4 L1497.2 892.3 L1498.1 896.3 L1499.3 900.2 L1500.7 904.0" fill="none" stroke="#f4af33" stroke-width="2" stroke-linejoin="round"/>
<path d="M1663.0 560.0 L1660.9 564.1 L1658.2 567.8 L1656.3 571.9 L1654.6 576.2 L1652.0 580.0 L1649.9 584.4 L1647.3 588.7 L1645.5 593.3 L1643.1 597.6 L1640.7 600.8 L1639.1 604.5 L1636.6 607.7 L1634.2 610.9 L1632.8 614.7 L1631.9 618.6 L1630.7 622.5 L1629.8 626.4 L1628.8 630.9 L1627.2 635.2 L1625.8 639.6 L1624.7 644.1 L1623.2 648.5 L1620.9 652.0 L1618.7 655.6 L1616.1 658.9 L1614.3 662.6 L1612.1 666.2 L1611.2 670.2 L1610.5 674.2 L1609.5 678.1 L1607.9 681.9 L1607.6 686.0 L1606.6 689.9 L1605.6 693.8 L1604.3 697.7 L1603.3 701.6 L1600.4 704.9 L1597.9 708.6 L1595.1 712.0 L1593.0 716.0 L1590.0 719.3 L1589.1 723.7 L1587.0 727.8 L1586.1 732.3 L1584.4 736.4 L1583.4 740.8 L1581.9 745.1 L1582.4 749.2 L1582.6 753.3 L1582.9 757.4 L1582.3 761.5 L1582.9 765.6 L1583.3 769.7 L1583.4 773.8 L1583.7 777.9 L1584.2 782.0 L1583.6 786.1 L1584.2 790.2 L1584.3 794.3 L1584.2 798.4 L1584.9 802.5 L1584.9 806.6 L1585.5 810.7 L1585.9 814.8 L1585.2 819.0 L1585.5 823.1 L1586.3 827.2 L1585.9 831.3 L1586.5 835.4 L1585.8 839.5 L1585.9 843.6 L1585.1 847.7 L1584.4 851.8 L1584.4 855.9 L1583.5 860.0 L1583.8 864.1 L1583.3 868.2 L1582.5 872.3 L1582.6 876.4 L1581.9 880.5 L1583.6 884.3 L1584.6 888.5 L1586.5 892.2 L1587.7 896.3 L1589.7 900.0 L1591.0 904.0" fill="none" stroke="#f4af33" stroke-width="2" stroke-linejoin="round"/>
<path d="M1705.5 730.0 L1703.5 733.6 L1701.0 737.0 L1698.8 740.6 L1695.9 743.6 L1694.1 747.4 L1691.6 750.7 L1689.7 754.4 L1687.0 757.7 L1684.8 761.2 L1682.4 764.6 L1678.6 766.1 L1674.9 767.9 L1671.0 769.3 L1667.0 770.4 L1663.0 771.6 L1659.4 773.6 L1655.5 775.3 L1651.7 776.8 L1647.8 778.3 L1644.0 779.9 L1640.2 781.6 L1636.1 782.6 L1632.4 784.4 L1628.5 785.8 L1624.8 788.2 L1620.7 789.9 L1617.1 792.5 L1613.2 794.5 L1609.1 796.1 L1605.6 798.8 L1601.6 800.7 L1597.5 802.5 L1593.7 804.6 L1590.0 807.0 L1586.7 809.5 L1583.0 811.4 L1579.3 813.3 L1576.0 815.7 L1572.2 817.4 L1569.0 820.2 L1565.1 821.7 L1561.8 824.3 L1558.5 826.7 L1554.8 828.6 L1551.3 830.5 L1547.9 832.6 L1544.1 834.0 L1540.7 836.2 L1536.9 837.5 L1533.5 839.7 L1530.0 841.7 L1526.5 843.7 L1522.8 845.2 L1519.4 847.4 L1515.6 848.7 L1512.4 851.2 L1508.6 852.7 L1505.1 854.5 L1501.7 856.6 L1497.9 858.0 L1494.5 860.2 L1490.9 862.0 L1487.2 863.9 L1483.6 865.9 L1480.0 868.2 L1476.3 870.1 L1472.8 872.4 L1469.1 874.3 L1465.1 875.7 L1461.7 878.2 L1457.9 879.9 L1454.5 882.3 L1450.6 883.9 L1447.0 886.0 L1443.1 887.6 L1439.2 889.0 L1435.3 890.7 L1431.5 892.4 L1427.5 893.7 L1423.6 895.3 L1419.7 896.8 L1415.6 897.8 L1411.8 899.7 L1407.9 901.1 L1403.8 902.1 L1400.0 904.0" fill="none" stroke="#f4af33" stroke-width="2" stroke-linejoin="round"/>
<path d="M1769.2 641.9 L1770.4 637.3 L1771.4 632.7 L1772.0 628.0 L1776.3 624.3 L1780.0 620.0 L1783.9 619.0 L1788.0 618.4 L1792.0 618.0 L1796.8 621.1 L1801.0 625.0 L1801.8 629.0 L1802.8 633.0 L1804.0 637.0 L1802.1 642.6 L1800.0 648.0 L1796.4 649.7 L1792.6 651.2 L1789.0 653.0 L1784.7 652.1 L1780.3 651.9 L1776.0 651.0 L1772.9 646.2 L1769.2 641.9" fill="none" stroke="#f4af33" stroke-width="2" stroke-linejoin="round"/>
<path d="M1767.0 560.0 L1767.1 564.4 L1766.9 568.8 L1767.3 573.3 L1767.4 577.7 L1767.0 582.1 L1767.5 586.6 L1768.5 591.0 L1769.4 595.4 L1771.0 599.7 L1771.4 604.2 L1775.4 607.6 L1779.0 611.4 L1782.5 615.3 L1786.9 619.7" fill="none" stroke="#f4af33" stroke-width="2" stroke-linejoin="round"/>
<path d="M1817.9 560.0 L1816.6 563.9 L1814.9 567.6 L1813.3 571.4 L1812.0 575.3 L1810.1 579.0 L1808.3 582.7 L1806.8 586.5 L1805.3 590.7 L1802.8 594.5 L1801.2 598.7 L1799.3 602.7 L1797.9 606.9 L1795.8 610.9 L1794.2 614.8 L1792.4 618.6" fill="none" stroke="#f4af33" stroke-width="2" stroke-linejoin="round"/>
<path d="M1802.4 637.4 L1806.5 635.4 L1810.3 632.9 L1814.1 630.4 L1818.5 628.9 L1822.3 626.4 L1827.5 625.9 L1832.6 624.7 L1837.8 624.2 L1842.3 625.4 L1846.3 627.8 L1850.7 629.3 L1855.0 630.8" fill="none" stroke="#f4af33" stroke-width="2" stroke-linejoin="round"/>
<path d="M1789.1 652.9 L1785.7 655.5 L1781.9 657.6 L1778.3 659.9 L1774.2 661.5 L1770.8 664.2 L1767.0 666.2 L1763.5 669.1 L1760.5 672.3 L1757.8 676.0 L1754.2 678.7 L1751.3 682.1 L1747.9 685.0 L1744.9 688.3 L1741.5 691.2 L1738.7 694.8 L1735.7 698.1 L1731.9 700.6 L1729.1 704.1 L1725.6 706.9 L1722.7 710.4 L1719.8 713.6 L1717.0 716.9 L1714.2 720.2 L1711.6 723.6 L1708.9 727.1 L1706.5 730.6 L1703.2 733.5 L1700.6 737.0 L1698.4 741.1 L1696.1 745.1 L1693.9 749.2 L1690.7 752.8 L1688.4 757.1 L1685.1 760.6 L1682.4 764.6 L1680.2 768.1 L1677.1 770.9 L1674.5 774.1 L1672.3 777.6 L1669.5 780.7 L1667.0 783.9 L1664.3 787.5 L1662.2 791.5 L1660.0 795.4 L1657.9 799.4 L1655.4 803.1 L1654.3 807.1 L1652.5 810.9 L1650.9 814.7 L1649.5 818.7 L1647.7 822.4 L1647.1 827.1 L1646.5 831.7 L1645.2 836.2 L1644.5 840.9 L1643.9 845.5 L1642.5 849.5 L1640.9 853.3 L1639.1 857.0 L1637.6 860.9 L1635.5 864.6 L1634.3 868.6 L1631.8 871.9 L1629.3 875.1 L1626.3 878.0 L1624.3 881.6 L1621.4 884.6 L1618.9 887.8 L1616.3 891.1 L1613.3 894.1 L1610.8 897.5 L1607.9 900.6 L1605.4 904.0" fill="none" stroke="#f4af33" stroke-width="2" stroke-linejoin="round"/>
<path d="M1789.1 652.9 L1789.1 657.4 L1788.3 661.7 L1788.1 666.2 L1787.9 670.6 L1787.3 675.0 L1786.9 679.4 L1786.9 683.9 L1786.5 688.4 L1785.6 692.8 L1784.7 697.2" fill="none" stroke="#f4af33" stroke-width="2" stroke-linejoin="round"/>
<path d="M1786.9 713.3 L1788.7 716.9 L1790.5 720.6 L1792.3 724.2 L1793.5 728.1 L1792.6 732.1 L1791.6 736.2 L1790.0 740.0 L1789.2 744.1 L1788.4 748.1 L1787.1 752.1 L1785.8 756.0 L1784.7 760.0 L1783.9 764.0 L1783.1 768.1 L1782.3 772.1 L1781.4 776.1 L1780.0 780.0" fill="none" stroke="#f4af33" stroke-width="2" stroke-linejoin="round"/>
<path d="M1793.5 728.1 L1795.9 731.7 L1798.9 734.9 L1802.1 737.8 L1804.6 741.4 L1806.5 745.2 L1808.3 749.1 L1810.8 752.6 L1813.3 756.1 L1815.0 760.0 L1817.5 763.3 L1820.1 766.6 L1822.7 769.8 L1825.0 773.4 L1827.9 776.4 L1830.0 780.0" fill="none" stroke="#f4af33" stroke-width="2" stroke-linejoin="round"/>
<path d="M1645.8 828.2 L1650.3 826.7 L1654.5 824.5 L1658.8 822.5 L1663.1 820.5 L1667.7 818.5 L1671.9 815.8 L1676.0 813.0 L1680.5 810.8" fill="none" stroke="#f4af33" stroke-width="2" stroke-linejoin="round"/>
<path d="M1710.3 810.8 L1715.1 811.2 L1719.9 811.8 L1724.7 812.8 L1728.4 810.9 L1732.5 810.2 L1736.4 808.8 L1740.1 807.0 L1743.9 804.9 L1747.7 802.9 L1751.7 801.2 L1753.7 797.4 L1755.9 793.7 L1757.9 789.8 L1759.4 785.8 L1763.7 786.0 L1768.0 786.8 L1770.0 782.3 L1771.7 777.8 L1773.3 773.2 L1774.8 768.5 L1776.6 764.9 L1778.4 761.3 L1780.8 758.1 L1782.3 754.3 L1784.3 750.8 L1786.3 747.3 L1788.3 743.0 L1790.0 738.6 L1792.4 734.5 L1794.0 730.0 L1797.4 733.7 L1800.8 737.4 L1803.6 741.5 L1807.0 743.9 L1810.5 746.2 L1813.9 748.7 L1817.4 751.0 L1821.0 753.1 L1824.1 756.3 L1827.4 759.2 L1831.1 761.7 L1834.4 764.6 L1836.3 768.5 L1838.6 772.2 L1840.2 776.2" fill="none" stroke="#f4af33" stroke-width="2" stroke-linejoin="round"/>
<path d="M1803.6 741.5 L1804.8 746.0 L1805.5 750.5 L1806.9 754.9 L1807.3 759.5 L1808.8 763.9 L1809.4 768.5 L1810.6 773.1 L1811.3 777.9 L1813.3 782.3 L1814.5 786.9 L1815.2 791.6 L1815.1 796.2 L1815.1 800.9 L1814.4 805.5 L1814.9 810.1 L1814.2 814.7 L1817.3 819.7 L1821.0 824.3 L1825.7 826.6 L1830.6 828.2 L1832.3 832.6 L1834.5 836.8 L1836.6 841.1 L1838.3 845.5 L1839.3 850.2 L1840.6 854.7 L1841.8 859.3 L1843.0 863.9 L1844.0 868.6 L1844.1 873.0 L1843.8 877.5 L1843.7 881.9 L1843.6 886.3 L1844.3 890.7 L1844.2 895.1 L1844.1 899.6 L1844.0 904.0" fill="none" stroke="#f4af33" stroke-width="2" stroke-linejoin="round"/>
<path d="M1855.0 783.9 L1852.7 787.2 L1850.6 790.7 L1848.5 794.2 L1846.0 797.4 L1844.4 801.4 L1842.3 805.2 L1840.2 808.9 L1837.8 812.5 L1836.3 816.6 L1834.0 820.3 L1832.2 824.2 L1830.6 828.2 L1826.7 830.3 L1823.2 832.8 L1819.8 835.5 L1816.1 837.8 L1812.9 840.9 L1809.0 842.9 L1805.5 845.5 L1804.0 849.3 L1802.8 853.3 L1801.2 857.0 L1799.8 860.9 L1796.1 863.4 L1793.1 866.7 L1789.6 869.4 L1786.3 872.4 L1783.1 875.3 L1779.8 878.0 L1776.2 880.4 L1773.4 883.8 L1770.0 886.4 L1766.4 888.8 L1763.2 891.7 L1759.4 894.2 L1755.7 897.0 L1751.6 898.9 L1747.9 901.6 L1744.0 904.0" fill="none" stroke="#f4af33" stroke-width="2" stroke-linejoin="round"/>
<path d="M1590.0 887.8 L1594.6 888.3 L1599.2 888.5 L1603.9 889.0 L1608.5 889.4 L1613.1 889.7 L1617.0 892.0 L1621.0 894.1 L1624.8 896.6 L1628.3 899.6 L1632.3 901.7 L1636.2 904.0" fill="none" stroke="#f4af33" stroke-width="2" stroke-linejoin="round"/>
<path d="M1613.6 884.7 L1612.3 888.7 L1610.0 892.3 L1608.9 896.4 L1607.4 900.3 L1605.4 904.0" fill="none" stroke="#f4af33" stroke-width="2" stroke-linejoin="round"/>
<path d="M1530.0 904.0 L1534.2 902.0 L1538.2 899.8 L1542.5 898.0 L1546.7 896.0 L1550.7 893.8 L1555.0 892.0 L1559.4 891.5 L1563.7 890.6 L1568.1 890.4 L1572.5 890.0 L1576.8 889.0 L1581.2 888.8 L1585.6 887.9 L1590.0 887.8" fill="none" stroke="#f4af33" stroke-width="2" stroke-linejoin="round"/>
<path d="M1477.0 346.0 L1480.9 349.1 L1484.5 352.6 L1488.6 355.5 L1492.5 358.6 L1496.5 360.9 L1500.7 363.0 L1504.9 364.8 L1506.8 368.5 L1507.5 372.7 L1509.3 376.5 L1511.0 380.3 L1515.3 381.5 L1519.3 383.7 L1523.6 385.0 L1527.7 384.7 L1531.8 384.4 L1535.9 385.0 L1540.0 384.4 L1544.2 384.5 L1548.2 383.7 L1552.4 384.2 L1556.5 383.3 L1560.6 383.3 L1564.7 383.4 L1569.2 383.3 L1573.7 382.9 L1578.2 383.5 L1582.8 383.1 L1587.3 383.2 L1591.8 383.6 L1596.3 383.4 L1600.3 382.1 L1604.5 381.3 L1608.4 379.8 L1612.5 378.8 L1616.4 377.2 L1620.6 377.1 L1624.9 377.4 L1629.1 377.2 L1633.3 376.4 L1637.5 376.6" fill="none" stroke="#f4af33" stroke-width="2" stroke-linejoin="round"/>
<path d="M1669.1 391.1 L1675.3 395.8 L1678.2 399.1 L1681.6 401.9 L1684.4 405.3 L1687.6 408.3 L1690.8 411.3 L1693.7 414.2 L1697.2 416.2 L1700.2 419.1 L1703.0 421.9 L1706.0 424.7 L1709.4 427.0 L1711.7 430.8 L1714.7 434.1 L1716.8 438.0 L1719.7 441.4 L1721.8 445.3 L1726.1 446.3 L1730.3 447.5 L1734.6 448.1 L1740.0 444.0 L1741.7 440.3 L1744.4 437.2 L1746.2 433.6 L1747.8 429.9 L1749.7 426.3 L1752.0 423.0 L1752.9 418.8 L1754.3 414.8 L1755.1 410.6 L1755.6 406.3 L1756.5 402.2 L1757.6 398.1 L1759.0 394.0 L1759.4 389.9 L1759.0 385.7 L1759.5 381.6 L1759.4 377.4 L1759.9 373.3 L1759.7 369.1 L1760.0 365.0 L1759.6 360.2 L1760.4 355.5 L1760.0 350.8 L1760.0 346.0" fill="none" stroke="#f4af33" stroke-width="2" stroke-linejoin="round"/>
<path d="M1734.6 448.1 L1731.0 450.1 L1727.4 452.2 L1723.8 454.3 L1720.8 457.3 L1717.1 459.2 L1713.7 461.6 L1710.0 463.5 L1707.9 467.7 L1705.4 471.7 L1703.6 476.0 L1701.5 479.6 L1700.3 483.6 L1698.3 487.3 L1695.9 490.7 L1694.2 494.5 L1692.6 498.3 L1690.6 502.0 L1688.2 506.2 L1686.0 510.5 L1683.0 514.4 L1680.8 518.7 L1679.6 523.2 L1677.8 527.6 L1676.8 532.2 L1676.0 536.8 L1674.3 541.2 L1671.8 545.2 L1669.3 549.2 L1666.2 552.7 L1663.8 556.8 L1661.3 560.7 L1659.1 564.9 L1656.4 568.7 L1653.6 572.5 L1650.9 576.3 L1648.3 580.2 L1646.6 584.0 L1645.2 587.8 L1643.6 591.7 L1642.3 595.6 L1640.1 599.2 L1638.6 603.0" fill="none" stroke="#f4af33" stroke-width="2" stroke-linejoin="round"/>
<path d="M1735.0 452.0 L1736.9 455.8 L1738.9 459.5 L1740.3 463.5 L1741.6 467.5 L1744.2 470.9 L1745.8 474.8 L1747.1 478.8 L1749.0 482.6 L1751.2 486.2 L1753.3 489.8 L1755.1 493.6 L1757.4 497.2 L1759.2 501.0 L1761.3 504.7 L1763.0 508.5 L1765.4 512.0 L1765.4 516.2 L1766.8 520.3 L1766.8 524.5 L1767.0 528.7 L1767.4 532.9 L1768.0 537.1 L1768.7 541.2 L1770.2 545.6 L1771.8 549.9 L1773.6 554.2 L1771.3 557.5 L1768.7 560.7 L1768.9 565.6 L1768.4 570.5 L1768.3 575.3 L1768.7 580.2 L1768.9 584.8 L1769.8 589.3 L1770.8 593.9 L1771.0 598.5 L1771.9 603.0 L1774.3 606.4 L1777.1 609.4 L1779.7 612.7 L1782.5 615.7 L1785.0 619.0 L1786.5 624.5 L1788.0 630.0" fill="none" stroke="#f4af33" stroke-width="2" stroke-linejoin="round"/>
<path d="M1855.0 489.0 L1852.6 492.3 L1850.3 495.8 L1847.6 498.9 L1845.1 502.2 L1842.1 505.1 L1840.0 508.7 L1837.7 512.4 L1835.5 516.2 L1833.4 520.0 L1831.1 523.7 L1828.7 527.4 L1826.6 531.2 L1824.0 534.7 L1822.8 538.8 L1820.4 542.4 L1819.2 546.4 L1817.5 550.3 L1815.8 554.2 L1814.4 558.2 L1812.9 562.1 L1811.4 566.1 L1809.5 569.9 L1807.7 573.7 L1807.1 578.6 L1805.9 583.4 L1805.2 588.3 L1804.5 593.2 L1802.3 596.7 L1800.9 600.7 L1798.6 604.2 L1797.0 608.0 L1795.6 612.0 L1793.6 615.6 L1791.5 619.2" fill="none" stroke="#f4af33" stroke-width="2" stroke-linejoin="round"/>
<path d="M1516.7 373.5 L1521.7 370.8 L1526.6 367.9 L1529.6 364.5 L1531.6 360.5 L1534.5 357.1 L1536.8 353.3 L1539.7 349.9 L1542.0 346.0" fill="none" stroke="#f4af33" stroke-width="2" stroke-linejoin="round"/>
<path d="M1516.7 375.0 L1520.3 377.5 L1523.3 380.6 L1526.6 383.4 L1525.3 387.8 L1525.0 392.3 L1524.2 396.7 L1523.5 401.2 L1522.5 405.6 L1521.5 410.0 L1520.4 414.4 L1520.3 418.8 L1520.9 423.2 L1520.8 427.5 L1521.1 431.9 L1520.8 436.3 L1521.0 440.7" fill="none" stroke="#f4af33" stroke-width="2" stroke-linejoin="round"/>
<path d="M1417.6 569.9 L1413.9 570.3 L1410.5 571.6 L1407.2 573.4 L1403.6 573.9 L1400.5 574.3 L1397.4 574.8 L1394.6 576.2 L1391.9 578.0 L1388.5 577.5 L1385.7 578.9 L1383.7 576.1 L1380.6 574.6 L1377.8 572.6 L1375.8 569.9 L1372.9 567.6 L1370.8 564.4 L1368.8 561.3 L1365.8 559.0 L1363.6 561.4 L1361.2 563.7 L1360.2 567.1 L1358.0 569.5 L1355.8 571.9 L1352.6 572.8 L1349.7 574.3 L1346.9 576.1 L1343.7 576.9 L1341.0 578.8 L1337.9 579.9 L1338.5 583.1 L1337.7 586.3 L1338.1 589.5 L1336.9 592.6 L1336.9 595.8 L1340.1 598.6 L1342.9 601.8 L1346.3 601.6 L1349.7 601.6 L1353.0 600.8 L1356.4 600.9 L1359.8 600.8 L1363.0 602.5 L1364.6 606.0 L1367.8 607.8 L1369.7 610.5 L1371.1 613.6 L1374.4 615.3 L1375.6 618.5 L1377.5 621.3 L1379.8 623.7 L1382.0 625.8 L1384.3 627.9 L1386.2 630.2 L1388.2 632.5 L1389.4 635.6 L1391.7 637.6 L1393.1 640.8 L1392.5 644.4 L1393.7 647.6 L1396.7 649.0 L1399.6 650.7 L1402.6 652.2 L1405.6 653.6 L1409.1 653.7 L1412.6 653.9 L1416.1 653.8 L1419.6 653.6 L1422.4 655.3 L1424.6 657.9 L1427.5 659.5" fill="none" stroke="#1a1a1a" stroke-width="1.1" stroke-linejoin="round"/>
<path d="M1342.9 601.8 L1340.4 604.2 L1337.2 605.5 L1334.4 607.4 L1332.0 609.8 L1328.7 611.4 L1326.2 614.0 L1323.0 615.7 L1323.8 619.4 L1324.7 623.0 L1326.8 626.2 L1328.0 629.7 L1329.4 633.1 L1330.0 636.7 L1330.2 640.3 L1332.0 643.6 L1328.8 644.3 L1325.5 644.6 L1322.2 643.9 L1319.0 643.6 L1315.7 643.5 L1312.5 644.3 L1309.2 643.3 L1306.0 644.7 L1302.7 643.9 L1299.5 645.2 L1296.2 644.5" fill="none" stroke="#1a1a1a" stroke-width="1.1" stroke-linejoin="round"/>
<path d="M1455.4 643.6 L1459.4 639.6 L1462.0 637.3 L1465.1 636.0 L1468.0 634.4 L1471.4 633.6 L1474.4 632.6 L1477.4 631.7 L1480.1 630.1 L1483.3 629.7 L1486.9 630.0 L1490.3 628.5 L1493.7 627.6 L1497.3 627.7 L1495.8 630.5 L1493.0 632.4 L1490.7 634.6 L1489.3 637.6 L1490.2 640.5 L1490.6 643.5 L1489.6 646.6 L1490.3 649.6 L1493.5 648.6 L1496.9 649.5 L1500.0 648.1 L1503.2 647.6 L1506.4 648.2 L1509.6 648.1 L1512.7 649.3 L1516.0 649.1 L1519.2 649.6 L1522.3 650.3 L1524.9 652.3 L1528.4 651.9 L1531.0 654.0 L1534.4 653.9 L1537.1 655.6 L1537.9 658.6 L1539.1 661.5 L1538.3 665.5 L1537.1 669.5 L1539.5 671.8 L1543.0 672.3 L1545.3 674.8 L1548.1 676.3 L1550.4 678.8 L1553.1 680.6 L1556.1 681.9 L1559.0 683.4 L1562.3 685.1 L1565.3 687.3 L1568.2 689.5 L1571.0 692.0" fill="none" stroke="#1a1a1a" stroke-width="1.1" stroke-linejoin="round"/>
<path d="M1537.1 667.5 L1534.1 668.0 L1531.2 668.6 L1528.2 669.0 L1525.1 668.4 L1522.2 668.9 L1519.2 669.5 L1516.8 672.4 L1513.2 674.2 L1511.2 677.5 L1508.0 678.0 L1504.8 677.4 L1501.7 678.1 L1498.5 676.8 L1495.3 677.5 L1491.6 678.9 L1488.8 681.8 L1485.3 683.4 L1483.9 687.3 L1483.3 691.4 L1479.7 691.8 L1476.5 693.8 L1473.0 694.7 L1469.4 695.4 L1465.4 695.9 L1461.4 696.4" fill="none" stroke="#1a1a1a" stroke-width="1.1" stroke-linejoin="round"/>
<path d="M1405.6 653.6 L1403.9 657.4 L1403.6 661.5 L1406.7 663.7 L1408.7 667.1 L1411.6 669.5 L1407.5 671.3 L1403.6 673.5 L1399.7 675.6 L1395.7 677.5 L1395.1 680.5 L1394.0 683.3 L1394.7 686.5 L1393.7 689.4 L1395.6 691.9 L1398.5 693.2 L1400.3 695.8 L1402.5 697.9 L1405.7 699.0 L1407.6 701.4 L1404.3 702.8 L1401.2 704.6 L1398.9 707.6 L1395.7 709.3 L1400.0 710.5 L1403.6 713.3 L1406.8 712.8 L1409.9 714.6 L1413.2 713.0 L1416.3 714.8 L1419.6 713.7 L1422.7 714.9 L1426.0 714.0 L1429.2 714.3 L1432.3 715.4 L1435.5 715.3 L1439.5 714.6 L1443.5 715.3" fill="none" stroke="#1a1a1a" stroke-width="1.1" stroke-linejoin="round"/>
<path d="M1255.4 713.2 L1258.3 712.1 L1261.5 712.4 L1264.3 711.2 L1267.3 710.7 L1270.3 710.1 L1272.8 707.7 L1275.8 707.2 L1279.0 707.4 L1281.9 706.5 L1284.6 704.6 L1287.7 704.6 L1290.5 703.3 L1293.6 703.0 L1296.5 701.8 L1299.2 700.2 L1302.1 699.0 L1305.6 699.6 L1308.2 697.4 L1311.4 697.2 L1313.9 694.9 L1317.1 694.4 L1320.0 693.4 L1323.0 692.6 L1326.1 693.0 L1329.2 692.4 L1332.3 693.1 L1335.3 692.0 L1338.4 692.9 L1341.4 692.3 L1344.5 691.5 L1347.5 691.8 L1350.6 691.9 L1353.7 692.5 L1356.7 691.3 L1359.8 691.4 L1362.5 693.4 L1363.9 696.6 L1366.3 698.8 L1368.8 701.0 L1371.8 702.7 L1373.8 705.3 L1377.0 705.3 L1380.1 706.0 L1383.3 706.3 L1386.5 706.8 L1389.4 708.2 L1392.6 708.6 L1395.7 709.3" fill="none" stroke="#1a1a1a" stroke-width="1.1" stroke-linejoin="round"/>
<path d="M1387.9 729.3 L1390.1 732.0 L1392.6 734.4 L1395.4 736.6 L1396.7 740.1 L1399.0 742.6 L1401.5 745.1 L1402.1 748.1 L1402.8 751.0 L1403.2 754.0 L1403.3 757.1 L1404.2 759.9 L1405.1 762.8 L1406.4 765.6 L1407.2 768.5 L1407.7 771.5 L1408.2 774.5 L1410.2 777.4 L1413.5 778.8 L1416.1 781.1 L1418.6 783.3 L1421.5 785.2 L1423.1 788.6 L1426.3 790.2 L1428.3 792.7 L1428.4 795.9 L1429.0 799.0 L1430.8 801.5 L1433.7 802.6 L1436.0 804.7 L1438.8 805.8 L1441.6 807.1 L1444.2 808.5 L1446.6 810.5 L1449.9 811.2 L1452.4 813.7 L1455.4 814.9 L1458.3 816.4 L1461.9 816.3 L1464.6 818.4" fill="none" stroke="#1a1a1a" stroke-width="1.1" stroke-linejoin="round"/>
<path d="M1373.8 705.3 L1374.1 708.4 L1375.4 711.2 L1375.5 714.4 L1376.3 717.3 L1377.3 720.2 L1376.8 723.5 L1379.1 726.1 L1378.9 729.3 L1378.0 732.4 L1377.4 735.5 L1377.5 738.8 L1376.9 741.9 L1376.6 745.1 L1373.7 747.3 L1372.5 750.8 L1369.7 753.1 L1367.3 755.7 L1365.4 758.7 L1362.3 758.5 L1359.2 757.5 L1356.0 757.6 L1353.0 757.0 L1349.9 756.4 L1346.8 755.8 L1343.6 756.0 L1340.5 755.3 L1338.8 758.6 L1337.4 762.0 L1336.0 765.4 L1337.6 768.6 L1338.1 772.3 L1339.8 775.5 L1340.5 779.0 L1339.6 782.0 L1340.1 785.1 L1339.5 788.2 L1339.7 791.3 L1339.5 794.4 L1339.8 797.5 L1339.7 800.6 L1338.1 803.5 L1338.6 806.7 L1338.5 809.7 L1338.3 812.8 L1338.6 815.8 L1338.5 818.9 L1339.9 821.8 L1340.4 824.8 L1339.6 828.0 L1340.5 830.9" fill="none" stroke="#1a1a1a" stroke-width="1.1" stroke-linejoin="round"/>
<path d="M1147.4 408.8 L1150.6 408.9 L1153.7 409.3 L1156.8 409.8 L1160.0 410.0 L1163.1 410.1 L1166.4 408.8 L1169.5 409.5 L1172.6 410.5 L1175.8 410.0 L1177.8 407.0 L1178.1 403.2 L1179.7 399.9 L1181.7 396.9" fill="none" stroke="#1a1a1a" stroke-width="1.1" stroke-linejoin="round"/>
<path d="M1127.2 421.3 L1128.8 417.9 L1130.4 414.6 L1133.0 411.8 L1133.9 408.1 L1136.5 405.3 L1138.1 401.9 L1139.5 398.5 L1142.0 395.7 L1143.2 392.0 L1145.6 389.2 L1146.9 385.6 L1148.8 382.5 L1151.2 379.6 L1153.7 376.7 L1154.4 372.9 L1156.4 369.8 L1158.7 366.8 L1161.9 369.1 L1164.8 371.7 L1168.5 373.2 L1171.9 375.0 L1174.7 378.0 L1178.9 378.7 L1181.7 381.5 L1185.2 382.6 L1188.9 382.1 L1192.5 382.3 L1196.0 382.7 L1199.5 383.9 L1201.0 388.6 L1201.8 393.4 L1205.8 395.1 L1210.1 395.7 L1209.2 391.9 L1209.6 388.0 L1209.4 384.1 L1208.9 380.3 L1212.7 379.9 L1216.5 379.9 L1220.3 378.9 L1224.1 378.6 L1227.9 379.2 L1232.2 380.2 L1236.0 382.4 L1240.3 383.4 L1244.4 385.0 L1247.6 387.4 L1250.2 390.5 L1253.4 393.0 L1256.3 395.7 L1259.7 397.5 L1262.5 400.3 L1265.9 402.2 L1269.3 404.0 L1270.2 407.9 L1270.0 411.9 L1270.5 415.9 L1273.8 418.1 L1276.7 420.7 L1280.2 422.6 L1283.9 424.1 L1287.0 426.5 L1290.6 428.9 L1295.2 429.0 L1298.9 431.2 L1301.3 437.2 L1304.9 438.5 L1308.2 440.6 L1312.2 441.0 L1315.5 443.1 L1314.3 447.9 L1313.1 452.6 L1315.9 455.7 L1317.0 459.9 L1318.9 463.5 L1321.4 466.8 L1324.4 468.8 L1327.2 471.1 L1330.8 472.2 L1333.5 474.6 L1336.8 476.2 L1340.1 478.4 L1343.5 480.4 L1347.0 482.2 L1350.0 484.8 L1353.3 487.0 L1357.1 488.3 L1360.5 490.4 L1361.4 494.6 L1363.6 498.5 L1363.7 502.9 L1365.2 507.0 L1368.0 509.8 L1370.6 512.8 L1373.7 515.1 L1377.3 517.0 L1380.2 519.7 L1383.0 522.4 L1383.9 526.8 L1386.2 530.8 L1386.5 535.4 L1389.2 538.2 L1392.3 540.7 L1395.1 543.4 L1397.9 546.2 L1400.0 549.6 L1403.8 552.9 L1408.1 555.4 L1411.1 557.5 L1413.5 560.2 L1415.9 562.9 L1417.8 566.1 L1421.4 567.6 L1423.4 570.7 L1426.8 572.5 L1430.1 574.6 L1433.2 577.1 L1436.7 578.9 L1440.0 580.9 L1443.7 582.2 L1447.4 582.4 L1451.1 583.2 L1454.8 583.6 L1458.3 585.2 L1462.0 585.8 L1465.9 585.0 L1469.5 585.6 L1473.2 586.3 L1476.8 587.3 L1480.5 585.6 L1484.4 584.7 L1488.3 583.6 L1491.9 581.8 L1495.6 580.0 L1499.7 579.6 L1502.1 576.2 L1504.6 572.9 L1507.4 569.8 L1510.5 566.9 L1512.4 563.1 L1515.9 561.3 L1519.0 558.9 L1522.4 556.9 L1525.8 554.9 L1528.5 551.9 L1532.6 551.0 L1535.8 548.7 L1538.8 546.2 L1544.0 545.8 L1549.0 544.0 L1550.8 548.8 L1550.7 553.3 L1551.7 557.7 L1547.7 561.7 L1549.0 566.1 L1552.8 567.5 L1556.5 569.2 L1558.9 572.7 L1561.6 575.9 L1563.0 580.0 L1565.4 583.4 L1568.2 585.8 L1570.4 588.7 L1572.4 591.7 L1574.2 594.9 L1577.8 597.5 L1576.0 601.0 L1574.1 605.7 L1571.2 609.9 L1572.5 613.2 L1574.0 616.4 L1574.2 620.0 L1578.3 622.7 L1581.1 626.7 L1583.0 630.3 L1584.3 634.1 L1585.2 638.1 L1586.2 642.0 L1587.8 645.9 L1587.1 650.2 L1588.3 654.2 L1589.9 658.1 L1590.0 662.3 L1591.7 666.4 L1592.9 670.7 L1593.9 675.0 L1592.4 679.4 L1591.1 683.8 L1588.8 687.8 L1585.1 688.2 L1581.4 688.9 L1578.1 690.9 L1574.6 691.8 L1571.0 692.8 L1574.1 694.8 L1576.6 697.4 L1578.8 700.3 L1581.1 703.0 L1585.1 703.9 L1588.6 706.1 L1592.8 706.2 L1596.4 708.1 L1599.9 709.4 L1602.1 712.9 L1605.6 714.3 L1609.0 715.7 L1611.7 718.3 L1611.3 722.1 L1611.9 726.0 L1610.7 729.8 L1610.4 733.6 L1608.4 737.2 L1607.4 741.1 L1606.8 745.1 L1605.3 748.8 L1604.9 752.8 L1603.6 756.5 L1602.8 760.3 L1600.7 763.8 L1600.0 767.7 L1595.5 766.5 L1591.1 764.9 L1586.5 764.3 L1583.0 765.4 L1579.5 766.4 L1575.7 766.2 L1572.1 766.6 L1568.6 767.7 L1565.0 768.6 L1561.6 769.9 L1558.9 773.4 L1556.8 777.2 L1554.9 781.2 L1556.5 785.0 L1557.1 789.1 L1558.5 793.0 L1559.4 797.0 L1556.0 798.7 L1552.4 799.6 L1548.7 800.1 L1545.1 801.0 L1541.3 801.2 L1537.5 801.6 L1534.2 803.4 L1530.3 803.4 L1526.7 804.2 L1523.3 806.0 L1520.4 808.9 L1518.8 812.8 L1515.1 811.2 L1511.3 809.7 L1507.7 807.8 L1504.1 806.1 L1500.7 803.8 L1497.1 805.1 L1493.2 805.1 L1489.3 805.3 L1485.6 806.2 L1482.0 807.6 L1478.2 808.3 L1474.6 810.6 L1471.1 812.9 L1468.4 816.5 L1464.6 818.4 L1460.7 816.7 L1456.9 814.9 L1452.9 813.7 L1448.8 812.8 L1444.8 812.3 L1440.9 812.8 L1437.0 813.4 L1433.0 812.8 L1428.9 813.4 L1425.2 815.3 L1421.1 815.7 L1417.3 817.3 L1415.5 820.6 L1415.5 824.4 L1414.6 828.0 L1412.6 831.3 L1412.1 834.9 L1412.0 838.7 L1410.5 842.1 L1407.8 844.6 L1404.8 846.4 L1401.1 847.1 L1398.1 849.2 L1395.8 852.1 L1392.4 853.4 L1389.8 850.0 L1387.0 846.8 L1383.4 844.4 L1379.5 845.1 L1375.7 846.6 L1371.8 847.2 L1368.1 848.9 L1364.3 850.1 L1360.0 849.4 L1356.3 851.2 L1353.1 853.6 L1350.3 856.4 L1346.8 858.5 L1344.4 861.8 L1340.9 863.8 L1338.3 866.9 L1334.9 868.9 L1332.6 872.2 L1329.5 874.6 L1326.5 877.0 L1323.5 879.5 L1320.2 881.6 L1316.6 880.8 L1312.9 880.7 L1309.4 879.7 L1305.7 879.5 L1302.2 878.2 L1300.5 874.7 L1297.5 872.2 L1295.4 868.9 L1293.3 865.7 L1291.5 862.3 L1288.5 859.7 L1287.0 856.1 L1284.1 853.4 L1282.2 850.4 L1280.4 847.4 L1278.5 844.4 L1275.9 841.9 L1274.7 838.5 L1272.9 835.4 L1271.0 832.2 L1269.3 829.0 L1269.2 825.0 L1266.7 822.1 L1265.8 818.5 L1264.8 814.9 L1263.1 811.6 L1261.6 808.3 L1260.3 804.6 L1259.6 800.8 L1258.7 797.0 L1258.1 793.1 L1255.9 789.7 L1255.7 785.7 L1254.2 782.1 L1253.2 778.4 L1252.6 774.5 L1251.9 770.9 L1250.3 767.7 L1249.3 764.3 L1248.0 760.9 L1250.6 758.0 L1253.1 755.0 L1254.7 751.4 L1257.2 748.4 L1259.3 745.1 L1261.9 742.1 L1264.6 739.1 L1267.5 736.3 L1269.8 733.0 L1272.5 730.1 L1275.1 727.1 L1277.3 724.4 L1280.3 722.2 L1282.2 719.2 L1284.7 716.7 L1287.1 714.0 L1288.4 710.5 L1291.0 708.1 L1287.4 708.5 L1283.8 708.3 L1280.2 709.0 L1276.9 710.8 L1273.3 711.3 L1269.7 711.3 L1266.2 712.4 L1262.6 712.6 L1259.1 713.5 L1255.4 713.2 L1258.6 711.6 L1261.7 709.9 L1264.8 708.2 L1267.1 705.3 L1270.6 704.3 L1273.6 702.3 L1276.1 699.7 L1279.8 699.0 L1282.9 697.2 L1285.2 694.2 L1288.5 692.8 L1292.0 691.2 L1294.3 688.1 L1297.4 686.0 L1300.9 684.5 L1303.7 682.0 L1305.9 678.8 L1309.2 676.9 L1312.3 674.8 L1315.2 672.5 L1312.8 669.6 L1310.5 666.6 L1308.6 663.4 L1307.1 659.8 L1303.9 657.4 L1302.6 653.8 L1300.3 650.8 L1297.6 648.1 L1296.2 644.5 L1294.8 641.3 L1294.1 637.8 L1292.8 634.6 L1290.9 631.5 L1291.3 627.7 L1289.8 624.5 L1289.0 621.1 L1286.3 618.3 L1285.5 614.8 L1284.7 611.4 L1286.6 607.1 L1289.8 603.8 L1288.2 600.6 L1285.5 598.2 L1283.3 595.4 L1281.7 592.2 L1280.4 588.8 L1278.3 586.0 L1275.8 583.4 L1272.2 583.8 L1268.7 584.0 L1265.1 582.6 L1261.6 583.3 L1258.0 583.4 L1256.7 579.8 L1254.2 576.7 L1252.5 573.2 L1252.0 569.3 L1249.9 566.0 L1247.8 562.7 L1247.6 558.6 L1245.3 555.4 L1242.9 552.3 L1240.6 549.1 L1237.1 547.0 L1235.6 543.1 L1232.0 541.1 L1230.0 537.6 L1229.9 533.6 L1228.5 529.9 L1227.9 526.0 L1225.3 522.8 L1223.2 519.3 L1221.4 515.6 L1218.0 513.0 L1216.0 509.4 L1212.9 507.2 L1210.7 504.0 L1207.7 501.7 L1204.9 499.2 L1202.3 496.5 L1199.5 494.0 L1197.0 491.1 L1194.7 488.1 L1191.7 486.0 L1188.9 483.6 L1186.7 480.6 L1183.4 478.9 L1180.9 476.3 L1178.1 473.9 L1176.1 470.3 L1175.0 466.4 L1173.0 462.8 L1172.0 458.9 L1171.0 454.9 L1167.5 452.7 L1165.6 448.9 L1162.5 446.3 L1159.2 443.9 L1156.8 440.7 L1153.8 438.8 L1151.3 436.2 L1147.5 435.5 L1145.3 432.5 L1141.9 431.1 L1139.0 429.1 L1136.4 426.6 L1133.0 425.3 L1130.2 423.2 L1127.2 421.3 Z" fill="none" stroke="#e0262b" stroke-width="1.2" stroke-linejoin="round" transform="translate(-0.6 -0.6)"/>
<path d="M1127.2 421.3 L1128.8 417.9 L1130.4 414.6 L1133.0 411.8 L1133.9 408.1 L1136.5 405.3 L1138.1 401.9 L1139.5 398.5 L1142.0 395.7 L1143.2 392.0 L1145.6 389.2 L1146.9 385.6 L1148.8 382.5 L1151.2 379.6 L1153.7 376.7 L1154.4 372.9 L1156.4 369.8 L1158.7 366.8 L1161.9 369.1 L1164.8 371.7 L1168.5 373.2 L1171.9 375.0 L1174.7 378.0 L1178.9 378.7 L1181.7 381.5 L1185.2 382.6 L1188.9 382.1 L1192.5 382.3 L1196.0 382.7 L1199.5 383.9 L1201.0 388.6 L1201.8 393.4 L1205.8 395.1 L1210.1 395.7 L1209.2 391.9 L1209.6 388.0 L1209.4 384.1 L1208.9 380.3 L1212.7 379.9 L1216.5 379.9 L1220.3 378.9 L1224.1 378.6 L1227.9 379.2 L1232.2 380.2 L1236.0 382.4 L1240.3 383.4 L1244.4 385.0 L1247.6 387.4 L1250.2 390.5 L1253.4 393.0 L1256.3 395.7 L1259.7 397.5 L1262.5 400.3 L1265.9 402.2 L1269.3 404.0 L1270.2 407.9 L1270.0 411.9 L1270.5 415.9 L1273.8 418.1 L1276.7 420.7 L1280.2 422.6 L1283.9 424.1 L1287.0 426.5 L1290.6 428.9 L1295.2 429.0 L1298.9 431.2 L1301.3 437.2 L1304.9 438.5 L1308.2 440.6 L1312.2 441.0 L1315.5 443.1 L1314.3 447.9 L1313.1 452.6 L1315.9 455.7 L1317.0 459.9 L1318.9 463.5 L1321.4 466.8 L1324.4 468.8 L1327.2 471.1 L1330.8 472.2 L1333.5 474.6 L1336.8 476.2 L1340.1 478.4 L1343.5 480.4 L1347.0 482.2 L1350.0 484.8 L1353.3 487.0 L1357.1 488.3 L1360.5 490.4 L1361.4 494.6 L1363.6 498.5 L1363.7 502.9 L1365.2 507.0 L1368.0 509.8 L1370.6 512.8 L1373.7 515.1 L1377.3 517.0 L1380.2 519.7 L1383.0 522.4 L1383.9 526.8 L1386.2 530.8 L1386.5 535.4 L1389.2 538.2 L1392.3 540.7 L1395.1 543.4 L1397.9 546.2 L1400.0 549.6 L1403.8 552.9 L1408.1 555.4 L1411.1 557.5 L1413.5 560.2 L1415.9 562.9 L1417.8 566.1 L1421.4 567.6 L1423.4 570.7 L1426.8 572.5 L1430.1 574.6 L1433.2 577.1 L1436.7 578.9 L1440.0 580.9 L1443.7 582.2 L1447.4 582.4 L1451.1 583.2 L1454.8 583.6 L1458.3 585.2 L1462.0 585.8 L1465.9 585.0 L1469.5 585.6 L1473.2 586.3 L1476.8 587.3 L1480.5 585.6 L1484.4 584.7 L1488.3 583.6 L1491.9 581.8 L1495.6 580.0 L1499.7 579.6 L1502.1 576.2 L1504.6 572.9 L1507.4 569.8 L1510.5 566.9 L1512.4 563.1 L1515.9 561.3 L1519.0 558.9 L1522.4 556.9 L1525.8 554.9 L1528.5 551.9 L1532.6 551.0 L1535.8 548.7 L1538.8 546.2 L1544.0 545.8 L1549.0 544.0 L1550.8 548.8 L1550.7 553.3 L1551.7 557.7 L1547.7 561.7 L1549.0 566.1 L1552.8 567.5 L1556.5 569.2 L1558.9 572.7 L1561.6 575.9 L1563.0 580.0 L1565.4 583.4 L1568.2 585.8 L1570.4 588.7 L1572.4 591.7 L1574.2 594.9 L1577.8 597.5 L1576.0 601.0 L1574.1 605.7 L1571.2 609.9 L1572.5 613.2 L1574.0 616.4 L1574.2 620.0 L1578.3 622.7 L1581.1 626.7 L1583.0 630.3 L1584.3 634.1 L1585.2 638.1 L1586.2 642.0 L1587.8 645.9 L1587.1 650.2 L1588.3 654.2 L1589.9 658.1 L1590.0 662.3 L1591.7 666.4 L1592.9 670.7 L1593.9 675.0 L1592.4 679.4 L1591.1 683.8 L1588.8 687.8 L1585.1 688.2 L1581.4 688.9 L1578.1 690.9 L1574.6 691.8 L1571.0 692.8 L1574.1 694.8 L1576.6 697.4 L1578.8 700.3 L1581.1 703.0 L1585.1 703.9 L1588.6 706.1 L1592.8 706.2 L1596.4 708.1 L1599.9 709.4 L1602.1 712.9 L1605.6 714.3 L1609.0 715.7 L1611.7 718.3 L1611.3 722.1 L1611.9 726.0 L1610.7 729.8 L1610.4 733.6 L1608.4 737.2 L1607.4 741.1 L1606.8 745.1 L1605.3 748.8 L1604.9 752.8 L1603.6 756.5 L1602.8 760.3 L1600.7 763.8 L1600.0 767.7 L1595.5 766.5 L1591.1 764.9 L1586.5 764.3 L1583.0 765.4 L1579.5 766.4 L1575.7 766.2 L1572.1 766.6 L1568.6 767.7 L1565.0 768.6 L1561.6 769.9 L1558.9 773.4 L1556.8 777.2 L1554.9 781.2 L1556.5 785.0 L1557.1 789.1 L1558.5 793.0 L1559.4 797.0 L1556.0 798.7 L1552.4 799.6 L1548.7 800.1 L1545.1 801.0 L1541.3 801.2 L1537.5 801.6 L1534.2 803.4 L1530.3 803.4 L1526.7 804.2 L1523.3 806.0 L1520.4 808.9 L1518.8 812.8 L1515.1 811.2 L1511.3 809.7 L1507.7 807.8 L1504.1 806.1 L1500.7 803.8 L1497.1 805.1 L1493.2 805.1 L1489.3 805.3 L1485.6 806.2 L1482.0 807.6 L1478.2 808.3 L1474.6 810.6 L1471.1 812.9 L1468.4 816.5 L1464.6 818.4 L1460.7 816.7 L1456.9 814.9 L1452.9 813.7 L1448.8 812.8 L1444.8 812.3 L1440.9 812.8 L1437.0 813.4 L1433.0 812.8 L1428.9 813.4 L1425.2 815.3 L1421.1 815.7 L1417.3 817.3 L1415.5 820.6 L1415.5 824.4 L1414.6 828.0 L1412.6 831.3 L1412.1 834.9 L1412.0 838.7 L1410.5 842.1 L1407.8 844.6 L1404.8 846.4 L1401.1 847.1 L1398.1 849.2 L1395.8 852.1 L1392.4 853.4 L1389.8 850.0 L1387.0 846.8 L1383.4 844.4 L1379.5 845.1 L1375.7 846.6 L1371.8 847.2 L1368.1 848.9 L1364.3 850.1 L1360.0 849.4 L1356.3 851.2 L1353.1 853.6 L1350.3 856.4 L1346.8 858.5 L1344.4 861.8 L1340.9 863.8 L1338.3 866.9 L1334.9 868.9 L1332.6 872.2 L1329.5 874.6 L1326.5 877.0 L1323.5 879.5 L1320.2 881.6 L1316.6 880.8 L1312.9 880.7 L1309.4 879.7 L1305.7 879.5 L1302.2 878.2 L1300.5 874.7 L1297.5 872.2 L1295.4 868.9 L1293.3 865.7 L1291.5 862.3 L1288.5 859.7 L1287.0 856.1 L1284.1 853.4 L1282.2 850.4 L1280.4 847.4 L1278.5 844.4 L1275.9 841.9 L1274.7 838.5 L1272.9 835.4 L1271.0 832.2 L1269.3 829.0 L1269.2 825.0 L1266.7 822.1 L1265.8 818.5 L1264.8 814.9 L1263.1 811.6 L1261.6 808.3 L1260.3 804.6 L1259.6 800.8 L1258.7 797.0 L1258.1 793.1 L1255.9 789.7 L1255.7 785.7 L1254.2 782.1 L1253.2 778.4 L1252.6 774.5 L1251.9 770.9 L1250.3 767.7 L1249.3 764.3 L1248.0 760.9 L1250.6 758.0 L1253.1 755.0 L1254.7 751.4 L1257.2 748.4 L1259.3 745.1 L1261.9 742.1 L1264.6 739.1 L1267.5 736.3 L1269.8 733.0 L1272.5 730.1 L1275.1 727.1 L1277.3 724.4 L1280.3 722.2 L1282.2 719.2 L1284.7 716.7 L1287.1 714.0 L1288.4 710.5 L1291.0 708.1 L1287.4 708.5 L1283.8 708.3 L1280.2 709.0 L1276.9 710.8 L1273.3 711.3 L1269.7 711.3 L1266.2 712.4 L1262.6 712.6 L1259.1 713.5 L1255.4 713.2 L1258.6 711.6 L1261.7 709.9 L1264.8 708.2 L1267.1 705.3 L1270.6 704.3 L1273.6 702.3 L1276.1 699.7 L1279.8 699.0 L1282.9 697.2 L1285.2 694.2 L1288.5 692.8 L1292.0 691.2 L1294.3 688.1 L1297.4 686.0 L1300.9 684.5 L1303.7 682.0 L1305.9 678.8 L1309.2 676.9 L1312.3 674.8 L1315.2 672.5 L1312.8 669.6 L1310.5 666.6 L1308.6 663.4 L1307.1 659.8 L1303.9 657.4 L1302.6 653.8 L1300.3 650.8 L1297.6 648.1 L1296.2 644.5 L1294.8 641.3 L1294.1 637.8 L1292.8 634.6 L1290.9 631.5 L1291.3 627.7 L1289.8 624.5 L1289.0 621.1 L1286.3 618.3 L1285.5 614.8 L1284.7 611.4 L1286.6 607.1 L1289.8 603.8 L1288.2 600.6 L1285.5 598.2 L1283.3 595.4 L1281.7 592.2 L1280.4 588.8 L1278.3 586.0 L1275.8 583.4 L1272.2 583.8 L1268.7 584.0 L1265.1 582.6 L1261.6 583.3 L1258.0 583.4 L1256.7 579.8 L1254.2 576.7 L1252.5 573.2 L1252.0 569.3 L1249.9 566.0 L1247.8 562.7 L1247.6 558.6 L1245.3 555.4 L1242.9 552.3 L1240.6 549.1 L1237.1 547.0 L1235.6 543.1 L1232.0 541.1 L1230.0 537.6 L1229.9 533.6 L1228.5 529.9 L1227.9 526.0 L1225.3 522.8 L1223.2 519.3 L1221.4 515.6 L1218.0 513.0 L1216.0 509.4 L1212.9 507.2 L1210.7 504.0 L1207.7 501.7 L1204.9 499.2 L1202.3 496.5 L1199.5 494.0 L1197.0 491.1 L1194.7 488.1 L1191.7 486.0 L1188.9 483.6 L1186.7 480.6 L1183.4 478.9 L1180.9 476.3 L1178.1 473.9 L1176.1 470.3 L1175.0 466.4 L1173.0 462.8 L1172.0 458.9 L1171.0 454.9 L1167.5 452.7 L1165.6 448.9 L1162.5 446.3 L1159.2 443.9 L1156.8 440.7 L1153.8 438.8 L1151.3 436.2 L1147.5 435.5 L1145.3 432.5 L1141.9 431.1 L1139.0 429.1 L1136.4 426.6 L1133.0 425.3 L1130.2 423.2 L1127.2 421.3 Z" fill="none" stroke="#e3262b" stroke-width="1.7" stroke-linejoin="round"/>
<path d="M1127.2 421.3 L1128.8 417.9 L1130.4 414.6 L1133.0 411.8 L1133.9 408.1 L1136.5 405.3 L1138.1 401.9 L1139.5 398.5 L1142.0 395.7 L1143.2 392.0 L1145.6 389.2 L1146.9 385.6 L1148.8 382.5 L1151.2 379.6 L1153.7 376.7 L1154.4 372.9 L1156.4 369.8 L1158.7 366.8 L1161.9 369.1 L1164.8 371.7 L1168.5 373.2 L1171.9 375.0 L1174.7 378.0 L1178.9 378.7 L1181.7 381.5 L1185.2 382.6 L1188.9 382.1 L1192.5 382.3 L1196.0 382.7 L1199.5 383.9 L1201.0 388.6 L1201.8 393.4 L1205.8 395.1 L1210.1 395.7 L1209.2 391.9 L1209.6 388.0 L1209.4 384.1 L1208.9 380.3 L1212.7 379.9 L1216.5 379.9 L1220.3 378.9 L1224.1 378.6 L1227.9 379.2 L1232.2 380.2 L1236.0 382.4 L1240.3 383.4 L1244.4 385.0 L1247.6 387.4 L1250.2 390.5 L1253.4 393.0 L1256.3 395.7 L1259.7 397.5 L1262.5 400.3 L1265.9 402.2 L1269.3 404.0 L1270.2 407.9 L1270.0 411.9 L1270.5 415.9 L1273.8 418.1 L1276.7 420.7 L1280.2 422.6 L1283.9 424.1 L1287.0 426.5 L1290.6 428.9 L1295.2 429.0 L1298.9 431.2 L1301.3 437.2 L1304.9 438.5 L1308.2 440.6 L1312.2 441.0 L1315.5 443.1 L1314.3 447.9 L1313.1 452.6 L1315.9 455.7 L1317.0 459.9 L1318.9 463.5 L1321.4 466.8 L1324.4 468.8 L1327.2 471.1 L1330.8 472.2 L1333.5 474.6 L1336.8 476.2 L1340.1 478.4 L1343.5 480.4 L1347.0 482.2 L1350.0 484.8 L1353.3 487.0 L1357.1 488.3 L1360.5 490.4 L1361.4 494.6 L1363.6 498.5 L1363.7 502.9 L1365.2 507.0 L1368.0 509.8 L1370.6 512.8 L1373.7 515.1 L1377.3 517.0 L1380.2 519.7 L1383.0 522.4 L1383.9 526.8 L1386.2 530.8 L1386.5 535.4 L1389.2 538.2 L1392.3 540.7 L1395.1 543.4 L1397.9 546.2 L1400.0 549.6 L1403.8 552.9 L1408.1 555.4 L1411.1 557.5 L1413.5 560.2 L1415.9 562.9 L1417.8 566.1 L1421.4 567.6 L1423.4 570.7 L1426.8 572.5 L1430.1 574.6 L1433.2 577.1 L1436.7 578.9 L1440.0 580.9 L1443.7 582.2 L1447.4 582.4 L1451.1 583.2 L1454.8 583.6 L1458.3 585.2 L1462.0 585.8 L1465.9 585.0 L1469.5 585.6 L1473.2 586.3 L1476.8 587.3 L1480.5 585.6 L1484.4 584.7 L1488.3 583.6 L1491.9 581.8 L1495.6 580.0 L1499.7 579.6 L1502.1 576.2 L1504.6 572.9 L1507.4 569.8 L1510.5 566.9 L1512.4 563.1 L1515.9 561.3 L1519.0 558.9 L1522.4 556.9 L1525.8 554.9 L1528.5 551.9 L1532.6 551.0 L1535.8 548.7 L1538.8 546.2 L1544.0 545.8 L1549.0 544.0 L1550.8 548.8 L1550.7 553.3 L1551.7 557.7 L1547.7 561.7 L1549.0 566.1 L1552.8 567.5 L1556.5 569.2 L1558.9 572.7 L1561.6 575.9 L1563.0 580.0 L1565.4 583.4 L1568.2 585.8 L1570.4 588.7 L1572.4 591.7 L1574.2 594.9 L1577.8 597.5 L1576.0 601.0 L1574.1 605.7 L1571.2 609.9 L1572.5 613.2 L1574.0 616.4 L1574.2 620.0 L1578.3 622.7 L1581.1 626.7 L1583.0 630.3 L1584.3 634.1 L1585.2 638.1 L1586.2 642.0 L1587.8 645.9 L1587.1 650.2 L1588.3 654.2 L1589.9 658.1 L1590.0 662.3 L1591.7 666.4 L1592.9 670.7 L1593.9 675.0 L1592.4 679.4 L1591.1 683.8 L1588.8 687.8 L1585.1 688.2 L1581.4 688.9 L1578.1 690.9 L1574.6 691.8 L1571.0 692.8 L1574.1 694.8 L1576.6 697.4 L1578.8 700.3 L1581.1 703.0 L1585.1 703.9 L1588.6 706.1 L1592.8 706.2 L1596.4 708.1 L1599.9 709.4 L1602.1 712.9 L1605.6 714.3 L1609.0 715.7 L1611.7 718.3 L1611.3 722.1 L1611.9 726.0 L1610.7 729.8 L1610.4 733.6 L1608.4 737.2 L1607.4 741.1 L1606.8 745.1 L1605.3 748.8 L1604.9 752.8 L1603.6 756.5 L1602.8 760.3 L1600.7 763.8 L1600.0 767.7 L1595.5 766.5 L1591.1 764.9 L1586.5 764.3 L1583.0 765.4 L1579.5 766.4 L1575.7 766.2 L1572.1 766.6 L1568.6 767.7 L1565.0 768.6 L1561.6 769.9 L1558.9 773.4 L1556.8 777.2 L1554.9 781.2 L1556.5 785.0 L1557.1 789.1 L1558.5 793.0 L1559.4 797.0 L1556.0 798.7 L1552.4 799.6 L1548.7 800.1 L1545.1 801.0 L1541.3 801.2 L1537.5 801.6 L1534.2 803.4 L1530.3 803.4 L1526.7 804.2 L1523.3 806.0 L1520.4 808.9 L1518.8 812.8 L1515.1 811.2 L1511.3 809.7 L1507.7 807.8 L1504.1 806.1 L1500.7 803.8 L1497.1 805.1 L1493.2 805.1 L1489.3 805.3 L1485.6 806.2 L1482.0 807.6 L1478.2 808.3 L1474.6 810.6 L1471.1 812.9 L1468.4 816.5 L1464.6 818.4 L1460.7 816.7 L1456.9 814.9 L1452.9 813.7 L1448.8 812.8 L1444.8 812.3 L1440.9 812.8 L1437.0 813.4 L1433.0 812.8 L1428.9 813.4 L1425.2 815.3 L1421.1 815.7 L1417.3 817.3 L1415.5 820.6 L1415.5 824.4 L1414.6 828.0 L1412.6 831.3 L1412.1 834.9 L1412.0 838.7 L1410.5 842.1 L1407.8 844.6 L1404.8 846.4 L1401.1 847.1 L1398.1 849.2 L1395.8 852.1 L1392.4 853.4 L1389.8 850.0 L1387.0 846.8 L1383.4 844.4 L1379.5 845.1 L1375.7 846.6 L1371.8 847.2 L1368.1 848.9 L1364.3 850.1 L1360.0 849.4 L1356.3 851.2 L1353.1 853.6 L1350.3 856.4 L1346.8 858.5 L1344.4 861.8 L1340.9 863.8 L1338.3 866.9 L1334.9 868.9 L1332.6 872.2 L1329.5 874.6 L1326.5 877.0 L1323.5 879.5 L1320.2 881.6 L1316.6 880.8 L1312.9 880.7 L1309.4 879.7 L1305.7 879.5 L1302.2 878.2 L1300.5 874.7 L1297.5 872.2 L1295.4 868.9 L1293.3 865.7 L1291.5 862.3 L1288.5 859.7 L1287.0 856.1 L1284.1 853.4 L1282.2 850.4 L1280.4 847.4 L1278.5 844.4 L1275.9 841.9 L1274.7 838.5 L1272.9 835.4 L1271.0 832.2 L1269.3 829.0 L1269.2 825.0 L1266.7 822.1 L1265.8 818.5 L1264.8 814.9 L1263.1 811.6 L1261.6 808.3 L1260.3 804.6 L1259.6 800.8 L1258.7 797.0 L1258.1 793.1 L1255.9 789.7 L1255.7 785.7 L1254.2 782.1 L1253.2 778.4 L1252.6 774.5 L1251.9 770.9 L1250.3 767.7 L1249.3 764.3 L1248.0 760.9 L1250.6 758.0 L1253.1 755.0 L1254.7 751.4 L1257.2 748.4 L1259.3 745.1 L1261.9 742.1 L1264.6 739.1 L1267.5 736.3 L1269.8 733.0 L1272.5 730.1 L1275.1 727.1 L1277.3 724.4 L1280.3 722.2 L1282.2 719.2 L1284.7 716.7 L1287.1 714.0 L1288.4 710.5 L1291.0 708.1 L1287.4 708.5 L1283.8 708.3 L1280.2 709.0 L1276.9 710.8 L1273.3 711.3 L1269.7 711.3 L1266.2 712.4 L1262.6 712.6 L1259.1 713.5 L1255.4 713.2 L1258.6 711.6 L1261.7 709.9 L1264.8 708.2 L1267.1 705.3 L1270.6 704.3 L1273.6 702.3 L1276.1 699.7 L1279.8 699.0 L1282.9 697.2 L1285.2 694.2 L1288.5 692.8 L1292.0 691.2 L1294.3 688.1 L1297.4 686.0 L1300.9 684.5 L1303.7 682.0 L1305.9 678.8 L1309.2 676.9 L1312.3 674.8 L1315.2 672.5 L1312.8 669.6 L1310.5 666.6 L1308.6 663.4 L1307.1 659.8 L1303.9 657.4 L1302.6 653.8 L1300.3 650.8 L1297.6 648.1 L1296.2 644.5 L1294.8 641.3 L1294.1 637.8 L1292.8 634.6 L1290.9 631.5 L1291.3 627.7 L1289.8 624.5 L1289.0 621.1 L1286.3 618.3 L1285.5 614.8 L1284.7 611.4 L1286.6 607.1 L1289.8 603.8 L1288.2 600.6 L1285.5 598.2 L1283.3 595.4 L1281.7 592.2 L1280.4 588.8 L1278.3 586.0 L1275.8 583.4 L1272.2 583.8 L1268.7 584.0 L1265.1 582.6 L1261.6 583.3 L1258.0 583.4 L1256.7 579.8 L1254.2 576.7 L1252.5 573.2 L1252.0 569.3 L1249.9 566.0 L1247.8 562.7 L1247.6 558.6 L1245.3 555.4 L1242.9 552.3 L1240.6 549.1 L1237.1 547.0 L1235.6 543.1 L1232.0 541.1 L1230.0 537.6 L1229.9 533.6 L1228.5 529.9 L1227.9 526.0 L1225.3 522.8 L1223.2 519.3 L1221.4 515.6 L1218.0 513.0 L1216.0 509.4 L1212.9 507.2 L1210.7 504.0 L1207.7 501.7 L1204.9 499.2 L1202.3 496.5 L1199.5 494.0 L1197.0 491.1 L1194.7 488.1 L1191.7 486.0 L1188.9 483.6 L1186.7 480.6 L1183.4 478.9 L1180.9 476.3 L1178.1 473.9 L1176.1 470.3 L1175.0 466.4 L1173.0 462.8 L1172.0 458.9 L1171.0 454.9 L1167.5 452.7 L1165.6 448.9 L1162.5 446.3 L1159.2 443.9 L1156.8 440.7 L1153.8 438.8 L1151.3 436.2 L1147.5 435.5 L1145.3 432.5 L1141.9 431.1 L1139.0 429.1 L1136.4 426.6 L1133.0 425.3 L1130.2 423.2 L1127.2 421.3 Z" fill="none" stroke="#1a1a1a" stroke-width="0.9" stroke-linejoin="round" transform="translate(0.6 0.6)" opacity=".6"/>
<g><rect x="963.5" y="684.8" width="35.3" height="14.6" fill="#5e8a4d"/><rect x="963.5" y="684.8" width="35.3" height="2.2" fill="#f2a53a"/><text x="981.1" y="696.8" text-anchor="middle" font-size="9" fill="#e9eee8" font-family="Liberation Sans" letter-spacing="0.5">G303</text></g>
<g><rect x="1044.6" y="683.4" width="35.3" height="14.6" fill="#5e8a4d"/><rect x="1044.6" y="683.4" width="35.3" height="2.2" fill="#f2a53a"/><text x="1062.2" y="695.4" text-anchor="middle" font-size="9" fill="#e9eee8" font-family="Liberation Sans" letter-spacing="0.5">G303</text></g>
<g><rect x="1102.8" y="639.7" width="35.3" height="14.6" fill="#5e8a4d"/><rect x="1102.8" y="639.7" width="35.3" height="2.2" fill="#f2a53a"/><text x="1120.5" y="651.7" text-anchor="middle" font-size="9" fill="#e9eee8" font-family="Liberation Sans" letter-spacing="0.5">G303</text></g>
<g><rect x="1169.7" y="629.6" width="35.3" height="14.6" fill="#5e8a4d"/><rect x="1169.7" y="629.6" width="35.3" height="2.2" fill="#f2a53a"/><text x="1187.4" y="641.6" text-anchor="middle" font-size="9" fill="#e9eee8" font-family="Liberation Sans" letter-spacing="0.5">G303</text></g>
<g><rect x="1139.8" y="696.5" width="35.3" height="14.6" fill="#5e8a4d"/><rect x="1139.8" y="696.5" width="35.3" height="2.2" fill="#f2a53a"/><text x="1157.5" y="708.5" text-anchor="middle" font-size="9" fill="#e9eee8" font-family="Liberation Sans" letter-spacing="0.5">G305</text></g>
<g><rect x="996.8" y="728.5" width="35.3" height="14.6" fill="#5e8a4d"/><rect x="996.8" y="728.5" width="35.3" height="2.2" fill="#f2a53a"/><text x="1014.4" y="740.5" text-anchor="middle" font-size="9" fill="#e9eee8" font-family="Liberation Sans" letter-spacing="0.5">G306</text></g>
<g><rect x="1055.7" y="740.6" width="31.6" height="14.6" fill="#5e8a4d"/><rect x="1055.7" y="740.6" width="31.6" height="2.2" fill="#f2a53a"/><text x="1071.5" y="752.6" text-anchor="middle" font-size="9" fill="#e9eee8" font-family="Liberation Sans" letter-spacing="0.5">G16</text></g>
<g><rect x="1155.6" y="767.2" width="35.3" height="14.6" fill="#5e8a4d"/><rect x="1155.6" y="767.2" width="35.3" height="2.2" fill="#f2a53a"/><text x="1173.2" y="779.2" text-anchor="middle" font-size="9" fill="#e9eee8" font-family="Liberation Sans" letter-spacing="0.5">G305</text></g>
<g><rect x="1030.8" y="787.4" width="35.3" height="14.6" fill="#5e8a4d"/><rect x="1030.8" y="787.4" width="35.3" height="2.2" fill="#f2a53a"/><text x="1048.5" y="799.4" text-anchor="middle" font-size="9" fill="#e9eee8" font-family="Liberation Sans" letter-spacing="0.5">G306</text></g>
<g><rect x="1081.6" y="803.5" width="31.6" height="14.6" fill="#5e8a4d"/><rect x="1081.6" y="803.5" width="31.6" height="2.2" fill="#f2a53a"/><text x="1097.4" y="815.5" text-anchor="middle" font-size="9" fill="#e9eee8" font-family="Liberation Sans" letter-spacing="0.5">G16</text></g>
<g><rect x="1126.7" y="839.5" width="35.3" height="14.6" fill="#5e8a4d"/><rect x="1126.7" y="839.5" width="35.3" height="2.2" fill="#f2a53a"/><text x="1144.4" y="851.5" text-anchor="middle" font-size="9" fill="#e9eee8" font-family="Liberation Sans" letter-spacing="0.5">G305</text></g>
<g><rect x="1233.6" y="829.7" width="35.3" height="14.6" fill="#5e8a4d"/><rect x="1233.6" y="829.7" width="35.3" height="2.2" fill="#f2a53a"/><text x="1251.2" y="841.7" text-anchor="middle" font-size="9" fill="#e9eee8" font-family="Liberation Sans" letter-spacing="0.5">G111</text></g>
<g><rect x="1227.6" y="890.3" width="35.3" height="14.6" fill="#5e8a4d"/><rect x="1227.6" y="890.3" width="35.3" height="2.2" fill="#f2a53a"/><text x="1245.2" y="902.3" text-anchor="middle" font-size="9" fill="#e9eee8" font-family="Liberation Sans" letter-spacing="0.5">G305</text></g>
<g><rect x="1138.0" y="898.7" width="35.3" height="14.6" fill="#5e8a4d"/><rect x="1138.0" y="898.7" width="35.3" height="2.2" fill="#f2a53a"/><text x="1155.7" y="910.7" text-anchor="middle" font-size="9" fill="#e9eee8" font-family="Liberation Sans" letter-spacing="0.5">G305</text></g>
<g><rect x="1637.9" y="376.9" width="31.6" height="14.6" fill="#5e8a4d"/><rect x="1637.9" y="376.9" width="31.6" height="2.2" fill="#f2a53a"/><text x="1653.7" y="388.9" text-anchor="middle" font-size="9" fill="#e9eee8" font-family="Liberation Sans" letter-spacing="0.5">G47</text></g>
<g><rect x="1664.6" y="511.9" width="31.6" height="14.6" fill="#5e8a4d"/><rect x="1664.6" y="511.9" width="31.6" height="2.2" fill="#f2a53a"/><text x="1680.4" y="523.9" text-anchor="middle" font-size="9" fill="#e9eee8" font-family="Liberation Sans" letter-spacing="0.5">G25</text></g>
<g><rect x="1630.4" y="580.9" width="31.6" height="14.6" fill="#5e8a4d"/><rect x="1630.4" y="580.9" width="31.6" height="2.2" fill="#f2a53a"/><text x="1646.2" y="592.9" text-anchor="middle" font-size="9" fill="#e9eee8" font-family="Liberation Sans" letter-spacing="0.5">G25</text></g>
<g><rect x="1564.7" y="376.6" width="31.6" height="14.6" fill="#5e8a4d"/><rect x="1564.7" y="376.6" width="31.6" height="2.2" fill="#f2a53a"/><text x="1580.5" y="388.6" text-anchor="middle" font-size="9" fill="#e9eee8" font-family="Liberation Sans" letter-spacing="0.5">G47</text></g>
<g><rect x="1364.6" y="367.9" width="35.3" height="14.6" fill="#5e8a4d"/><rect x="1364.6" y="367.9" width="35.3" height="2.2" fill="#f2a53a"/><text x="1382.2" y="379.9" text-anchor="middle" font-size="9" fill="#e9eee8" font-family="Liberation Sans" letter-spacing="0.5">G111</text></g>
<g><rect x="1358.7" y="444.7" width="35.3" height="14.6" fill="#5e8a4d"/><rect x="1358.7" y="444.7" width="35.3" height="2.2" fill="#f2a53a"/><text x="1376.4" y="456.7" text-anchor="middle" font-size="9" fill="#e9eee8" font-family="Liberation Sans" letter-spacing="0.5">G111</text></g>
<g><rect x="1413.8" y="544.5" width="35.3" height="14.6" fill="#5e8a4d"/><rect x="1413.8" y="544.5" width="35.3" height="2.2" fill="#f2a53a"/><text x="1431.5" y="556.5" text-anchor="middle" font-size="9" fill="#e9eee8" font-family="Liberation Sans" letter-spacing="0.5">G111</text></g>
<g><rect x="1355.6" y="572.3" width="40.3" height="14.6" fill="#5e8a4d"/><rect x="1355.6" y="572.3" width="40.3" height="2.2" fill="#f2a53a"/><text x="1375.8" y="584.3" text-anchor="middle" font-size="9" fill="#e9eee8" font-family="Liberation Sans" letter-spacing="0.5">G2511</text></g>
<g><rect x="1600.8" y="650.4" width="31.6" height="14.6" fill="#5e8a4d"/><rect x="1600.8" y="650.4" width="31.6" height="2.2" fill="#f2a53a"/><text x="1616.6" y="662.4" text-anchor="middle" font-size="9" fill="#e9eee8" font-family="Liberation Sans" letter-spacing="0.5">G25</text></g>
<g><rect x="1535.6" y="665.5" width="35.3" height="14.6" fill="#5e8a4d"/><rect x="1535.6" y="665.5" width="35.3" height="2.2" fill="#f2a53a"/><text x="1553.2" y="677.5" text-anchor="middle" font-size="9" fill="#e9eee8" font-family="Liberation Sans" letter-spacing="0.5">G303</text></g>
<g><rect x="1450.6" y="718.7" width="40.3" height="14.6" fill="#5e8a4d"/><rect x="1450.6" y="718.7" width="40.3" height="2.2" fill="#f2a53a"/><text x="1470.8" y="730.7" text-anchor="middle" font-size="9" fill="#e9eee8" font-family="Liberation Sans" letter-spacing="0.5">G2511</text></g>
<g><rect x="1614.3" y="729.4" width="35.3" height="14.6" fill="#5e8a4d"/><rect x="1614.3" y="729.4" width="35.3" height="2.2" fill="#f2a53a"/><text x="1632.0" y="741.4" text-anchor="middle" font-size="9" fill="#e9eee8" font-family="Liberation Sans" letter-spacing="0.5">G303</text></g>
<g><rect x="1570.9" y="747.9" width="35.3" height="14.6" fill="#5e8a4d"/><rect x="1570.9" y="747.9" width="35.3" height="2.2" fill="#f2a53a"/><text x="1588.6" y="759.9" text-anchor="middle" font-size="9" fill="#e9eee8" font-family="Liberation Sans" letter-spacing="0.5">G203</text></g>
<g><rect x="1771.6" y="698.5" width="31.6" height="14.6" fill="#5e8a4d"/><rect x="1771.6" y="698.5" width="31.6" height="2.2" fill="#e25b4a"/><text x="1787.4" y="710.5" text-anchor="middle" font-size="9" fill="#e9eee8" font-family="Liberation Sans" letter-spacing="0.5">S26</text></g>
<g><rect x="1680.8" y="803.4" width="31.6" height="14.6" fill="#5e8a4d"/><rect x="1680.8" y="803.4" width="31.6" height="2.2" fill="#e25b4a"/><text x="1696.6" y="815.4" text-anchor="middle" font-size="9" fill="#e9eee8" font-family="Liberation Sans" letter-spacing="0.5">S14</text></g>
<g><rect x="1523.9" y="828.6" width="31.6" height="14.6" fill="#5e8a4d"/><rect x="1523.9" y="828.6" width="31.6" height="2.2" fill="#f2a53a"/><text x="1539.7" y="840.6" text-anchor="middle" font-size="9" fill="#e9eee8" font-family="Liberation Sans" letter-spacing="0.5">G25</text></g>
<g><rect x="1456.6" y="862.9" width="31.6" height="14.6" fill="#5e8a4d"/><rect x="1456.6" y="862.9" width="31.6" height="2.2" fill="#f2a53a"/><text x="1472.4" y="874.9" text-anchor="middle" font-size="9" fill="#e9eee8" font-family="Liberation Sans" letter-spacing="0.5">G25</text></g>
<g><rect x="1795.8" y="830.6" width="40.3" height="14.6" fill="#5e8a4d"/><rect x="1795.8" y="830.6" width="40.3" height="2.2" fill="#f2a53a"/><text x="1816.0" y="842.6" text-anchor="middle" font-size="9" fill="#e9eee8" font-family="Liberation Sans" letter-spacing="0.5">G1212</text></g>
<g><rect x="1751.8" y="875.6" width="40.3" height="14.6" fill="#5e8a4d"/><rect x="1751.8" y="875.6" width="40.3" height="2.2" fill="#f2a53a"/><text x="1772.0" y="887.6" text-anchor="middle" font-size="9" fill="#e9eee8" font-family="Liberation Sans" letter-spacing="0.5">G1212</text></g>
<g><rect x="1839.8" y="769.7" width="40.3" height="14.6" fill="#5e8a4d"/><rect x="1839.8" y="769.7" width="40.3" height="2.2" fill="#f2a53a"/><text x="1860.0" y="781.7" text-anchor="middle" font-size="9" fill="#e9eee8" font-family="Liberation Sans" letter-spacing="0.5">G1212</text></g>
<g><rect x="1256.3" y="482.9" width="35.3" height="14.6" fill="#5e8a4d"/><rect x="1256.3" y="482.9" width="35.3" height="2.2" fill="#f2a53a"/><text x="1274.0" y="494.9" text-anchor="middle" font-size="9" fill="#e9eee8" font-family="Liberation Sans" letter-spacing="0.5">G304</text></g>
<g><rect x="1828.0" y="894.8" width="35.3" height="14.6" fill="#5e8a4d"/><rect x="1828.0" y="894.8" width="35.3" height="2.2" fill="#f2a53a"/><text x="1845.7" y="906.8" text-anchor="middle" font-size="9" fill="#e9eee8" font-family="Liberation Sans" letter-spacing="0.5">G303</text></g>
<g><rect x="1362.0" y="665.5" width="35.3" height="14.6" fill="#5e8a4d"/><rect x="1362.0" y="665.5" width="35.3" height="2.2" fill="#f2a53a"/><text x="1379.7" y="677.5" text-anchor="middle" font-size="9" fill="#e9eee8" font-family="Liberation Sans" letter-spacing="0.5">G303</text></g>
<g><rect x="1457.8" y="793.6" width="40.3" height="14.6" fill="#5e8a4d"/><rect x="1457.8" y="793.6" width="40.3" height="2.2" fill="#f2a53a"/><text x="1478.0" y="805.6" text-anchor="middle" font-size="9" fill="#e9eee8" font-family="Liberation Sans" letter-spacing="0.5">G2511</text></g>
<circle cx="1087.6" cy="879.8" r="3" fill="#e87a6c" stroke="#d45a4a" stroke-width=".8"/>
<text x="1075.9" y="876" font-size="13" fill="#777">赤峰</text>
<circle cx="1516.7" cy="373.5" r="3" fill="#e87a6c" stroke="#d45a4a" stroke-width=".8"/>
<text x="1505" y="370.5" font-size="13" fill="#777">白城</text>
<circle cx="1733.5" cy="448.1" r="3" fill="#e87a6c" stroke="#d45a4a" stroke-width=".8"/>
<text x="1721.5" y="443" font-size="13" fill="#777">松原</text>
<circle cx="1681.5" cy="745.5" r="3" fill="#e87a6c" stroke="#d45a4a" stroke-width=".8"/>
<text x="1669" y="742.5" font-size="13" fill="#777">四平</text>
<circle cx="1767.6" cy="786.9" r="3" fill="#e87a6c" stroke="#d45a4a" stroke-width=".8"/>
<text x="1755.5" y="783" font-size="13" fill="#777">辽源</text>
<circle cx="1613.6" cy="884.7" r="3" fill="#e87a6c" stroke="#d45a4a" stroke-width=".8"/>
<text x="1601.8" y="880.5" font-size="13" fill="#777">铁岭</text>
<circle cx="1787.4" cy="649.7" r="3.5" fill="#fff" stroke="#d33" stroke-width="1.5"/><circle cx="1787.4" cy="649.7" r="1.3" fill="#d33"/>
<text x="1774" y="645" font-size="14" fill="#333">长春</text>
<text x="1380" y="909" font-size="13" fill="#777">阜新</text>
<defs><g id="mk0"><path d="M-8.3 7 L0 27.5 L8.3 7 Z" fill="#3d9fe0"/><circle r="12.2" fill="#3d9fe0"/><circle r="9.3" fill="#fff"/><path d="M-5.5 -6.2 h6 v10.5 h-6 Z M1 -1.5 h3.8 v5.8 h-3.8 Z" fill="#3d9fe0"/><path d="M-4.2 -3.8 h3.4 M-4.2 -1.2 h3.4 M-4.2 1.4 h3.4 M1.8 0.6 h2.2 M1.8 2.4 h2.2" stroke="#fff" stroke-width="1"/><rect x="-6.5" y="4.3" width="12.3" height="1.1" fill="#3d9fe0"/></g><g id="mk1"><path d="M-8.3 7 L0 27.5 L8.3 7 Z" fill="#3d9fe0"/><circle r="12.2" fill="#3d9fe0"/><circle r="9.3" fill="#fff"/><path d="M-6 -4.5 l2.5 -1.8 v10.5 h-2.5 Z" fill="#8cc6ee"/><path d="M-3.5 -6.3 l2.8 1.8 v8.7 h-2.8 Z" fill="#3d9fe0"/><path d="M-0.7 -1.5 l3 1.3 v4.4 h-3 Z" fill="#8cc6ee"/><path d="M2.3 -0.2 l2.8 1.2 v3.2 h-2.8 Z" fill="#3d9fe0"/><rect x="-6.5" y="4.2" width="12.5" height="1" fill="#3d9fe0"/></g></defs>
<use href="#mk1" x="1142.6" y="389.8"/>
<use href="#mk0" x="1169.9" y="374.4"/>
<use href="#mk0" x="1168.7" y="380.3"/>
<use href="#mk0" x="1171" y="389.8"/>
<use href="#mk1" x="1140.3" y="399.3"/>
<use href="#mk0" x="1163.9" y="393.4"/>
<use href="#mk0" x="1168.7" y="426.5"/>
<use href="#mk0" x="1309.6" y="527.1"/>
<use href="#mk1" x="1300.1" y="533.1"/>
<use href="#mk0" x="1253.4" y="569.4"/>
<use href="#mk1" x="1522.6" y="586"/>
<use href="#mk0" x="1504.8" y="606.3"/>
<use href="#mk1" x="1562.6" y="594.9"/>
<use href="#mk0" x="1442.5" y="653.6"/>
<use href="#mk0" x="1439.5" y="659.5"/>
<use href="#mk0" x="1449.5" y="657.5"/>
<use href="#mk0" x="1459.4" y="663.5"/>
<use href="#mk0" x="1463.4" y="667.5"/>
<use href="#mk0" x="1455" y="665"/>
<use href="#mk0" x="1447.5" y="673.5"/>
<use href="#mk0" x="1443.5" y="689.4"/>
<use href="#mk0" x="1449.5" y="693.4"/>
<use href="#mk0" x="1345.8" y="662.3"/>
<use href="#mk0" x="1352.1" y="673.8"/>
<use href="#mk0" x="1331.8" y="670"/>
<use href="#mk1" x="1348.3" y="675"/>
<use href="#mk0" x="1384.5" y="719.2"/>
<use href="#mk0" x="1359.7" y="739.5"/>
<use href="#mk0" x="1566.2" y="744"/>
<use href="#mk0" x="1468" y="759.8"/>
<use href="#mk0" x="1278.5" y="777"/>
<use href="#mk0" x="1280.8" y="780.1"/>
<use href="#mk0" x="1283" y="795.9"/>
<use href="#mk1" x="1368.7" y="804.9"/>
<use href="#mk0" x="1402.6" y="800.4"/>
<use href="#mk0" x="1397" y="802.7"/>
<use href="#mk0" x="1324.8" y="835.4"/>
<use href="#mk0" x="1345.1" y="842.1"/>
<use href="#mk0" x="1460.1" y="781.2"/>
<use href="#mk0" x="1478.2" y="797"/>
<circle cx="974.8" cy="377.2" r="19.5" fill="#000" opacity=".12"/><circle cx="973.8" cy="375.7" r="19.5" fill="#f7f7f7" stroke="#a0a0a0" stroke-width="1"/>
<path d="M969.3 365.7 l4.5 -5 l4.5 5 M969.3 385.7 l4.5 5 l4.5 -5 M964.7 370.2 l-5.6 5.5 l5.6 5.5 M983.8 370.2 l5.6 5.5 l-5.6 5.5" fill="none" stroke="#3d6fd8" stroke-width="1.7"/>
<rect x="971.4" y="418" width="4.9" height="70" fill="#fff" stroke="#bbb" stroke-width=".8"/>
<rect x="971.7" y="495" width="4.3" height="27" fill="#9bb8f0" stroke="#7f9fe0" stroke-width=".6"/>
<rect x="965.7" y="401.5" width="16.6" height="16.7" rx="1.5" fill="#fafafa" stroke="#aaa" stroke-width=".8"/>
<rect x="965.7" y="486.4" width="16.6" height="9.1" rx="1.5" fill="#fafafa" stroke="#aaa" stroke-width=".8"/>
<rect x="965.7" y="521.3" width="16.6" height="16.7" rx="1.5" fill="#fafafa" stroke="#aaa" stroke-width=".8"/>
<path d="M969.8 410 h7.8 M973.7 406 v8 M969.8 529.6 h7.8 M969.5 491 h8.4" stroke="#3d6fd8" stroke-width="1.6"/>
<rect x="1370.1" y="351.5" width="74.4" height="19.5" rx="2" fill="#fff" stroke="#8aa6d8" stroke-width="1"/>
<rect x="1370.1" y="351.5" width="36.6" height="19.5" rx="2" fill="#8aa6e0"/>
<text x="1377" y="366" font-size="12" fill="#fff" font-weight="bold">地图</text><text x="1413" y="366" font-size="12" fill="#222">混合</text>
<g fill="#1a3fd0"><ellipse cx="978" cy="901" rx="2.5" ry="4"/><ellipse cx="985" cy="901" rx="2.5" ry="4"/></g>
</svg></div>
</body></html>
